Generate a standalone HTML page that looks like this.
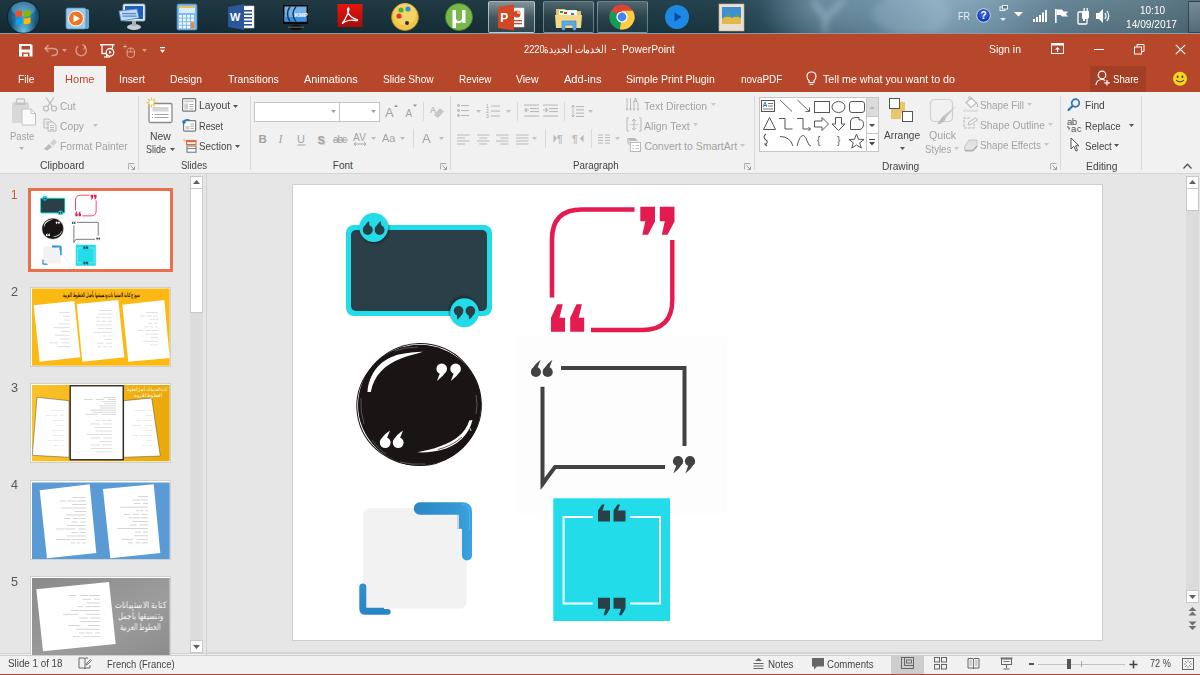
<!DOCTYPE html>
<html><head><meta charset="utf-8">
<style>
*{margin:0;padding:0;box-sizing:border-box}
html,body{width:1200px;height:675px;overflow:hidden;background:#e6e6e6;font-family:"Liberation Sans",sans-serif;position:relative}
.a{position:absolute}
svg.a{overflow:visible}
.t{position:absolute;white-space:nowrap;line-height:1;transform-origin:0 0}

</style></head><body>
<div class="a" style="left:0px;top:0px;width:1200px;height:33px;background:linear-gradient(90deg,#132c36 0%,#15303a 40%,#1a3945 60%,#2a4d5c 64%,#4f7487 69%,#6d92a8 74%,#84a6bb 78%,#7597ac 83%,#5f7f90 88%,#5a7886 95%,#4d6a78 100%);"></div>
<div class="a" style="left:0px;top:0px;width:1200px;height:33px;background:radial-gradient(ellipse 60px 40px at 820px 10px,rgba(160,190,210,0.35),rgba(160,190,210,0) 100%);"></div>
<div class="a" style="left:0px;top:0px;width:1200px;height:33px;background:linear-gradient(180deg,rgba(255,255,255,0.05),rgba(0,0,0,0.08));"></div>
<svg class="a" style="left:0px;top:0px;" width="1200" height="33" viewBox="0 0 1200 33"><defs><filter id="blr"><feGaussianBlur stdDeviation="3"/></filter></defs><g filter="url(#blr)" opacity="0.35" stroke="#c8e0ee" fill="none"><path d="M812 0 Q822 12 825 20 L825 33" stroke-width="5"/><path d="M845 0 Q832 10 826 20" stroke-width="5"/></g><ellipse cx="912" cy="14" rx="40" ry="20" fill="#a9c6d8" opacity="0.25" filter="url(#blr)"/></svg>
<div class="a" style="left:0px;top:33px;width:1200px;height:1px;background:#8a9ba3;"></div>
<div class="a" style="left:0px;top:34px;width:1200px;height:58px;background:#b7472a;"></div>
<div class="a" style="left:0px;top:92px;width:1200px;height:81px;background:#f1f1f1;"></div>
<div class="a" style="left:0px;top:173px;width:1200px;height:1px;background:#d4d4d4;"></div>
<div class="a" style="left:0px;top:174px;width:1200px;height:481px;background:#e6e6e6;"></div>
<div class="a" style="left:0px;top:653px;width:1200px;height:1px;background:#d0d0d0;"></div>
<div class="a" style="left:0px;top:654px;width:1200px;height:20px;background:#f1f1f1;"></div>
<div class="a" style="left:0px;top:674px;width:1200px;height:1px;background:#b7472a;"></div>
<svg class="a" style="left:6px;top:0px;" width="35" height="34" viewBox="0 0 35 34"><defs><radialGradient id="orb" cx="50%" cy="45%" r="55%"><stop offset="0" stop-color="#4aa8d8"/><stop offset="0.55" stop-color="#21709e"/><stop offset="1" stop-color="#123a55"/></radialGradient><radialGradient id="orb2" cx="50%" cy="95%" r="45%"><stop offset="0" stop-color="#7fe0ff" stop-opacity="0.8"/><stop offset="1" stop-color="#7fe0ff" stop-opacity="0"/></radialGradient></defs>
<circle cx="17.5" cy="17" r="16.6" fill="#0b1e28"/><circle cx="17.5" cy="17" r="15.8" fill="url(#orb)"/><circle cx="17.5" cy="17" r="15.8" fill="url(#orb2)"/>
<ellipse cx="17.5" cy="9" rx="12" ry="7" fill="#b9e2f7" opacity="0.28"/>
<g transform="translate(18.5 17.5) rotate(-8) translate(-18.5 -17.5)">
<path d="M10.5 10.5 Q13.5 9 17 10.5 L16.2 16.5 Q13 15.2 9.8 16.5 Z" fill="#f25022"/>
<path d="M18.5 10.8 Q22 12 25.5 10.5 L24.7 16.5 Q21.3 17.8 17.7 16.6 Z" fill="#7fba00"/>
<path d="M9.6 17.8 Q12.8 16.5 15.9 17.9 L15.1 23.8 Q12 22.5 8.8 23.8 Z" fill="#00a4ef"/>
<path d="M17.5 18.1 Q21 19.3 24.5 17.8 L23.7 23.9 Q20.2 25.2 16.7 23.9 Z" fill="#ffb900"/></g></svg>
<svg class="a" style="left:64px;top:7px;" width="27" height="24" viewBox="0 0 27 24"><rect x="5" y="2" width="20" height="20" rx="2" fill="#6aa6cf"/><rect x="2" y="1" width="20" height="21" rx="2" fill="#9ccbec" stroke="#4a86b0" stroke-width="0.8"/>
<circle cx="12" cy="11.5" r="7.5" fill="#f0731e" stroke="#fff" stroke-width="1"/><path d="M9.5 7.5 L16 11.5 L9.5 15.5 Z" fill="#fff"/></svg>
<svg class="a" style="left:117px;top:3px;" width="31" height="28" viewBox="0 0 31 28"><rect x="6" y="1" width="22" height="17" rx="1.5" fill="#dfe9f2" stroke="#9aaab8" stroke-width="0.8"/><rect x="8" y="3" width="18" height="13" fill="#1d5fc0"/>
<path d="M2 8 L20 6 L22 15 L4 18 Z" fill="#c3daf5" stroke="#4f86c7" stroke-width="0.8"/>
<g fill="#4f86c7"><rect x="5" y="10" width="14" height="1.2"/><rect x="5.5" y="12.5" width="14" height="1.2"/></g>
<ellipse cx="17" cy="24" rx="7" ry="3" fill="#c8cdd2"/><rect x="15" y="18" width="4" height="5" fill="#aab3bb"/></svg>
<svg class="a" style="left:176px;top:3px;" width="22" height="28" viewBox="0 0 22 28"><rect x="1" y="1" width="20" height="26" rx="1.5" fill="#7fb9e6" stroke="#3c84c4" stroke-width="0.8"/><rect x="3" y="3" width="16" height="7" fill="#d4ecfb"/><rect x="3" y="3" width="16" height="2" fill="#e8c35a"/>
<g fill="#e8f5ff"><rect x="3" y="12.0" width="3" height="2.6"/><rect x="7" y="12.0" width="3" height="2.6"/><rect x="11" y="12.0" width="3" height="2.6"/><rect x="15" y="12.0" width="3" height="2.6"/><rect x="3" y="15.6" width="3" height="2.6"/><rect x="7" y="15.6" width="3" height="2.6"/><rect x="11" y="15.6" width="3" height="2.6"/><rect x="15" y="15.6" width="3" height="2.6"/><rect x="3" y="19.2" width="3" height="2.6"/><rect x="7" y="19.2" width="3" height="2.6"/><rect x="11" y="19.2" width="3" height="2.6"/><rect x="15" y="19.2" width="3" height="2.6"/><rect x="3" y="22.8" width="3" height="2.6"/><rect x="7" y="22.8" width="3" height="2.6"/><rect x="11" y="22.8" width="3" height="2.6"/><rect x="15" y="22.8" width="3" height="2.6"/></g><rect x="15" y="19.2" width="3" height="6.2" fill="#f08a2a"/></svg>
<svg class="a" style="left:227px;top:3px;" width="29" height="28" viewBox="0 0 29 28"><rect x="11" y="3" width="16" height="22" fill="#fff" stroke="#c8c8c8" stroke-width="0.6"/><g fill="#2b579a"><rect x="14" y="7" width="11" height="1.6"/><rect x="14" y="10.5" width="11" height="1.6"/><rect x="14" y="14" width="11" height="1.6"/><rect x="14" y="17.5" width="11" height="1.6"/><rect x="14" y="21" width="11" height="1.6"/></g>
<path d="M1 4 L17 1 L17 27 L1 24 Z" fill="#2b579a"/><text x="3" y="18" font-family="Liberation Sans" font-weight="bold" font-size="11" fill="#fff">W</text></svg>
<svg class="a" style="left:282px;top:4px;" width="27" height="27" viewBox="0 0 27 27"><rect x="1" y="1" width="25" height="19" fill="#0a0a0a"/><rect x="2.5" y="2.5" width="22" height="15" fill="#74b3ea"/><rect x="2.5" y="13" width="22" height="4.5" fill="#3d8ee0"/><path d="M8 2.5 Q3 10 8 17.5" fill="none" stroke="#163a5a" stroke-width="1.5"/><path d="M14 2.5 Q8 10 14 17.5" fill="none" stroke="#1c3550" stroke-width="1.3"/><text x="12.5" y="13" font-family="Liberation Sans" font-weight="bold" font-size="6" fill="#f4f8fc">KMP</text><ellipse cx="14" cy="23.5" rx="6" ry="2.8" fill="#111"/><rect x="6" y="22.5" width="16" height="1.5" fill="#777" opacity="0.6"/></svg>
<svg class="a" style="left:337px;top:3px;" width="27" height="25" viewBox="0 0 27 25"><defs><linearGradient id="acr" x1="0" y1="0" x2="0" y2="1"><stop offset="0" stop-color="#e8140c"/><stop offset="1" stop-color="#a80c0c"/></linearGradient></defs><rect x="0.5" y="1" width="25" height="23" fill="url(#acr)"/><path d="M5.5 20 Q8 17 11 10 Q12.5 5 11.5 5 Q10 5 11 9.5 Q13 14.5 20 16.5 Q21.5 18 18.5 17.5 Q12 16 6.5 19.5 Q5 21 5.5 20 Z" fill="none" stroke="#fff" stroke-width="1.3"/></svg>
<svg class="a" style="left:390px;top:2px;" width="30" height="30" viewBox="0 0 30 30"><circle cx="15" cy="15" r="13.5" fill="#f0c64a" stroke="#b48a1a" stroke-width="0.8"/><circle cx="15" cy="12" r="11" fill="#f7dd7c" opacity="0.6"/><circle cx="11" cy="8" r="2.6" fill="#4cae3a"/><circle cx="18" cy="7" r="2.6" fill="#2a8fd8"/><circle cx="9" cy="14" r="2.6" fill="#e3342a"/><circle cx="17" cy="21" r="2" fill="#333"/></svg>
<svg class="a" style="left:444px;top:2px;" width="30" height="30" viewBox="0 0 30 30"><circle cx="15" cy="15" r="13.5" fill="#78b74a" stroke="#4d8a2a" stroke-width="0.8"/><path d="M8.5 8 L12 8 L12 16 Q12 19 15 19 Q18 19 18 16 L18 8 L21.5 8 L21.5 21 L18.3 21 L18.3 19.3 Q16.8 21.5 14 21.3 Q12.5 21.2 12 20.5 L12 26 L8.5 26 Z" fill="#fff"/></svg>
<div class="a" style="left:488px;top:1px;width:47px;height:32px;background:linear-gradient(180deg,rgba(255,255,255,0.45),rgba(255,255,255,0.18) 50%,rgba(255,255,255,0.12));border:1px solid rgba(255,255,255,0.55);border-radius:2px;"></div>
<svg class="a" style="left:497px;top:4px;" width="30" height="27" viewBox="0 0 30 27"><rect x="10" y="4" width="17" height="19" fill="#fff" stroke="#d6d6d6" stroke-width="0.6"/><circle cx="20" cy="10" r="3.5" fill="#d24726"/><path d="M20 6.5 L20 10 L23.5 10 A3.5 3.5 0 0 0 20 6.5Z" fill="#f3a58c"/><rect x="16" y="16" width="9" height="1.3" fill="#d24726"/><rect x="16" y="19" width="9" height="1.3" fill="#d24726"/>
<path d="M1 3 L17 0.5 L17 26.5 L1 24 Z" fill="#d24726"/><text x="3.2" y="17.5" font-family="Liberation Sans" font-weight="bold" font-size="12" fill="#fff">P</text></svg>
<div class="a" style="left:543px;top:1px;width:51px;height:32px;background:linear-gradient(180deg,rgba(255,255,255,0.22),rgba(255,255,255,0.06) 50%,rgba(255,255,255,0.03));border:1px solid rgba(255,255,255,0.32);border-radius:2px;"></div>
<svg class="a" style="left:554px;top:5px;" width="30" height="26" viewBox="0 0 30 26"><path d="M2 4 L11 4 L13 6 L27 6 L27 22 L2 22 Z" fill="#e8c66a"/><rect x="5" y="5" width="18" height="10" fill="#fff" opacity="0.9"/><rect x="6" y="6" width="3" height="2" fill="#2e9e4a"/><rect x="10" y="7" width="3" height="2" fill="#d33"/><rect x="17" y="8" width="3" height="2" fill="#3a7ad8"/><path d="M1 10 L28 10 L27 23 L2 23 Z" fill="#f3d88a"/><path d="M8 16 L22 16 L22 25 L19 25 L19 20 L11 20 L11 25 L8 25 Z" fill="#5aaee8" stroke="#2e7fc0" stroke-width="0.6"/></svg>
<div class="a" style="left:597px;top:1px;width:51px;height:32px;background:linear-gradient(180deg,rgba(255,255,255,0.22),rgba(255,255,255,0.06) 50%,rgba(255,255,255,0.03));border:1px solid rgba(255,255,255,0.32);border-radius:2px;"></div>
<svg class="a" style="left:608px;top:3px;" width="28" height="28" viewBox="0 0 28 28"><circle cx="14" cy="14" r="12.5" fill="#db4437"/><path d="M14 14 L3.2 7.7 A12.5 12.5 0 0 0 11.8 26.3 Z" fill="#0f9d58"/><path d="M14 14 L11.8 26.3 A12.5 12.5 0 0 0 24.8 7.7 L14 7.7 Z" fill="#ffcd40"/><circle cx="14" cy="14" r="5.6" fill="#fff"/><circle cx="14" cy="14" r="4.4" fill="#4285f4"/></svg>
<svg class="a" style="left:664px;top:4px;" width="26" height="26" viewBox="0 0 26 26"><circle cx="13" cy="13" r="12" fill="#1e88e5"/><path d="M10.5 8.5 L17.5 13 L10.5 17.5 Z" fill="#0d47a1"/></svg>
<svg class="a" style="left:718px;top:3px;" width="28" height="30" viewBox="0 0 28 30"><rect x="1" y="1" width="25" height="27" fill="#e9e1cf" stroke="#bdb29a" stroke-width="0.6"/><rect x="4" y="4" width="19" height="17" fill="#3d8fd6"/><path d="M4 16 Q9 11 14 15 Q18 12 23 15 L23 21 L4 21 Z" fill="#e2b84a"/><path d="M8 14 L10 9 L12 14 Z" fill="#4caf50"/><path d="M17 14 L19 10 L21 14 Z" fill="#4caf50"/></svg>
<div class="t" style="left:958.00px;top:10.69px;font-size:11px;color:#e8eef2;transform:scaleX(0.818);">FR</div>
<svg class="a" style="left:976px;top:8px;" width="15" height="15" viewBox="0 0 15 15"><circle cx="7.5" cy="7.5" r="6.8" fill="#1a43b8" stroke="#cfd8e8" stroke-width="1"/><circle cx="7.5" cy="6" r="5" fill="#3d6ee0" opacity="0.5"/><text x="4.6" y="11.3" font-family="Liberation Sans" font-weight="bold" font-size="10" fill="#fff">?</text></svg>
<svg class="a" style="left:997px;top:5px;" width="12" height="20" viewBox="0 0 12 20"><rect x="3" y="2" width="5" height="3.5" fill="none" stroke="#e8eef2" stroke-width="1"/><rect x="5.5" y="0.5" width="5" height="3.5" fill="#5a7886" stroke="#e8eef2" stroke-width="1"/><path d="M3 13 L9 13 L6 16 Z" fill="#e8eef2"/></svg>
<svg class="a" style="left:1013px;top:11px;" width="11" height="6" viewBox="0 0 11 6"><path d="M1 1 L10 1 L5.5 5.5 Z" fill="#fff"/></svg>
<svg class="a" style="left:1032px;top:9px;" width="16" height="14" viewBox="0 0 16 14"><g fill="#fff"><rect x="1" y="10" width="2" height="3"/><rect x="4" y="8" width="2" height="5"/><rect x="7" y="6" width="2" height="7"/><rect x="10" y="3.5" width="2" height="9.5"/><rect x="13" y="1" width="2" height="12"/></g></svg>
<svg class="a" style="left:1054px;top:8px;" width="16" height="16" viewBox="0 0 16 16"><rect x="1" y="1" width="1.6" height="14" fill="#fff"/><path d="M2.6 1.5 L8 1.5 L9.5 3.5 L14 3.5 L12 6 L14 8.5 L8 8.5 L6.8 7 L2.6 7 Z" fill="#fff"/></svg>
<svg class="a" style="left:1077px;top:7px;" width="15" height="18" viewBox="0 0 15 18"><rect x="1" y="5" width="9" height="12" rx="1" fill="none" stroke="#fff" stroke-width="1.3"/><path d="M5 4 L12 4 L12 10 Q12 12 9 12 L8 12 L8 14 L6 14 L6 12 Q5 12 5 10 Z" fill="#fff"/><rect x="6.5" y="1" width="1.3" height="3" fill="#fff"/><rect x="9.5" y="1" width="1.3" height="3" fill="#fff"/></svg>
<svg class="a" style="left:1095px;top:8px;" width="17" height="16" viewBox="0 0 17 16"><path d="M1 5 L4 5 L8 1 L8 15 L4 11 L1 11 Z" fill="#fff"/><path d="M10 5 Q12 8 10 11" fill="none" stroke="#fff" stroke-width="1.2"/><path d="M12 3 Q15.5 8 12 13" fill="none" stroke="#fff" stroke-width="1.2"/></svg>
<div class="t" style="left:1139.50px;top:5.19px;font-size:11px;color:#fff;transform:scaleX(0.908);">10:10</div>
<div class="t" style="left:1126.00px;top:18.69px;font-size:11px;color:#fff;transform:scaleX(0.926);">14/09/2017</div>
<div class="a" style="left:1188px;top:1px;width:12px;height:32px;background:linear-gradient(180deg,rgba(255,255,255,0.18),rgba(255,255,255,0.05));border:1px solid rgba(20,30,40,0.6);border-right:none;"></div>
<svg class="a" style="left:18.5px;top:44px;" width="14" height="13" viewBox="0 0 14 13"><path d="M0 0 L12 0 L13.5 1.5 L13.5 12.5 L0 12.5 Z" fill="#fff"/><rect x="2.5" y="2" width="8.5" height="3.5" fill="#b7472a"/><rect x="3" y="8.5" width="7.5" height="4" fill="#b7472a"/><rect x="4.5" y="9.8" width="4.5" height="2.7" fill="#fff"/></svg>
<svg class="a" style="left:44px;top:44px;" width="15" height="12" viewBox="0 0 15 12"><path d="M4.5 1 L1 4.5 L4.5 8" fill="none" stroke="rgba(255,255,255,0.45)" stroke-width="1.4"/><path d="M1.5 4.5 L8.5 4.5 Q13.5 4.5 13.5 8 Q13.5 11.5 9 11.5 L7.5 11.5" fill="none" stroke="rgba(255,255,255,0.45)" stroke-width="1.4"/></svg>
<svg class="a" style="left:62px;top:48.5px;" width="6" height="4" viewBox="0 0 6 4"><path d="M0 0 L5 0 L2.5 3 Z" fill="rgba(255,255,255,0.45)"/></svg>
<svg class="a" style="left:75px;top:44px;" width="13" height="12" viewBox="0 0 13 12"><path d="M9.5 2.5 A5.2 5.2 0 1 1 3.2 2.2" fill="none" stroke="rgba(255,255,255,0.45)" stroke-width="1.4"/><path d="M7.5 0.5 L10.5 2.5 L8.5 5.5" fill="none" stroke="rgba(255,255,255,0.45)" stroke-width="1.3"/></svg>
<svg class="a" style="left:100px;top:44px;" width="15" height="14" viewBox="0 0 15 14"><rect x="0" y="0" width="14.5" height="1.4" fill="#fff"/><path d="M2 1 L2 9.5 L7 9.5" fill="none" stroke="#fff" stroke-width="1.3"/><path d="M12.5 1 L12.5 4.5" fill="none" stroke="#fff" stroke-width="1.3"/><circle cx="10" cy="8.3" r="3.8" fill="none" stroke="#fff" stroke-width="1.3"/><path d="M9 6.5 L11.8 8.3 L9 10.1 Z" fill="#fff"/><path d="M4 13 L10 13" stroke="#fff" stroke-width="1.2"/><path d="M6.5 10 L6.5 13" stroke="#fff" stroke-width="1.1"/></svg>
<svg class="a" style="left:122px;top:43.5px;" width="14" height="14" viewBox="0 0 14 14"><path d="M3 0.5 L3 4.5 M1 2.5 L5 2.5" stroke="rgba(255,255,255,0.45)" stroke-width="1"/><rect x="5" y="4" width="7.5" height="9.5" rx="3.7" fill="none" stroke="rgba(255,255,255,0.45)" stroke-width="1.1"/><path d="M8.75 4 L8.75 8 M5 8 L12.5 8" stroke="rgba(255,255,255,0.45)" stroke-width="1"/></svg>
<svg class="a" style="left:141.5px;top:48.5px;" width="5" height="4" viewBox="0 0 5 4"><path d="M0 0 L5 0 L2.5 3 Z" fill="rgba(255,255,255,0.45)"/></svg>
<svg class="a" style="left:160px;top:47px;" width="5" height="7" viewBox="0 0 5 7"><rect x="0" y="0" width="5" height="1.2" fill="#fff"/><path d="M0 2.8 L5 2.8 L2.5 6 Z" fill="#fff"/></svg>
<div class="t" style="left:523.50px;top:43.69px;font-size:11px;color:#fff;transform:scaleX(0.846);">2220</div>
<div class="t" style="left:544.00px;top:43.69px;font-size:11px;color:#fff;transform:scaleX(0.826);">الخدمات الجديدة</div>
<div class="a" style="left:612px;top:49px;width:4px;height:1px;background:#fff;"></div>
<div class="t" style="left:621.80px;top:43.69px;font-size:11px;color:#fff;transform:scaleX(0.937);">PowerPoint</div>
<div class="t" style="left:989.00px;top:43.69px;font-size:11px;color:#fff;transform:scaleX(0.951);">Sign in</div>
<svg class="a" style="left:1051px;top:43px;" width="14" height="12" viewBox="0 0 14 12"><rect x="0.5" y="0.5" width="12" height="10" fill="none" stroke="#fff" stroke-width="1"/><rect x="0.5" y="0.5" width="12" height="2" fill="#fff"/><path d="M6.5 4 L4 6.5 L9 6.5 Z" fill="#fff"/><rect x="6" y="6" width="1" height="3" fill="#fff"/></svg>
<div class="a" style="left:1094px;top:49px;width:10px;height:1px;background:#fff;"></div>
<svg class="a" style="left:1134px;top:44px;" width="11" height="11" viewBox="0 0 11 11"><rect x="0.5" y="3" width="7" height="7" fill="none" stroke="#fff" stroke-width="1"/><path d="M3 3 L3 0.5 L10 0.5 L10 7.5 L7.5 7.5" fill="none" stroke="#fff" stroke-width="1"/></svg>
<svg class="a" style="left:1175px;top:44px;" width="11" height="11" viewBox="0 0 11 11"><path d="M0.8 0.8 L10.2 10.2 M10.2 0.8 L0.8 10.2" stroke="#fff" stroke-width="1.1"/></svg>
<div class="a" style="left:54px;top:66px;width:52px;height:26px;background:#f1f1f1;"></div>
<div class="t" style="left:17.50px;top:73.69px;font-size:11px;color:#ffffff;transform:scaleX(0.931);">File</div>
<div class="t" style="left:65.00px;top:73.69px;font-size:11px;color:#b7472a;transform:scaleX(1.005);">Home</div>
<div class="t" style="left:119.00px;top:73.69px;font-size:11px;color:#ffffff;transform:scaleX(0.945);">Insert</div>
<div class="t" style="left:170.00px;top:73.69px;font-size:11px;color:#ffffff;transform:scaleX(0.935);">Design</div>
<div class="t" style="left:228.00px;top:73.69px;font-size:11px;color:#ffffff;transform:scaleX(0.952);">Transitions</div>
<div class="t" style="left:304.00px;top:73.69px;font-size:11px;color:#ffffff;transform:scaleX(0.987);">Animations</div>
<div class="t" style="left:382.50px;top:73.69px;font-size:11px;color:#ffffff;transform:scaleX(0.921);">Slide Show</div>
<div class="t" style="left:458.80px;top:73.69px;font-size:11px;color:#ffffff;transform:scaleX(0.901);">Review</div>
<div class="t" style="left:516.30px;top:73.69px;font-size:11px;color:#ffffff;transform:scaleX(0.952);">View</div>
<div class="t" style="left:563.80px;top:73.69px;font-size:11px;color:#ffffff;transform:scaleX(1.005);">Add-ins</div>
<div class="t" style="left:626.30px;top:73.69px;font-size:11px;color:#ffffff;transform:scaleX(0.955);">Simple Print Plugin</div>
<div class="t" style="left:740.50px;top:73.69px;font-size:11px;color:#ffffff;transform:scaleX(0.899);">novaPDF</div>
<svg class="a" style="left:806px;top:71px;" width="11" height="15" viewBox="0 0 11 15"><path d="M5.5 1 Q1 1 1 5.5 Q1 8 3 9.5 L3 11.5 L8 11.5 L8 9.5 Q10 8 10 5.5 Q10 1 5.5 1 Z" fill="none" stroke="#fff" stroke-width="1.1"/><path d="M3.5 13.3 L7.5 13.3" stroke="#fff" stroke-width="1.1"/></svg>
<div class="t" style="left:822.50px;top:73.69px;font-size:11px;color:#ffffff;transform:scaleX(0.972);">Tell me what you want to do</div>
<div class="a" style="left:1090px;top:66px;width:55.5px;height:26px;background:#a43e24;"></div>
<svg class="a" style="left:1095px;top:70px;" width="16" height="16" viewBox="0 0 16 16"><circle cx="7" cy="5" r="3.8" fill="none" stroke="#fff" stroke-width="1.2"/><path d="M1 15 Q1.5 9.5 7 9.5 Q9 9.5 10 10.5" fill="none" stroke="#fff" stroke-width="1.2"/><path d="M12 10 L12 15.5 M9.3 12.8 L14.7 12.8" stroke="#fff" stroke-width="1.2"/></svg>
<div class="t" style="left:1113.00px;top:73.69px;font-size:11px;color:#ffffff;transform:scaleX(0.876);">Share</div>
<svg class="a" style="left:1172px;top:71px;" width="16" height="16" viewBox="0 0 16 16"><circle cx="8" cy="7.8" r="7" fill="#f7d41e"/><ellipse cx="5.6" cy="5.8" rx="0.9" ry="1.3" fill="#333"/><ellipse cx="10.4" cy="5.8" rx="0.9" ry="1.3" fill="#333"/><path d="M4 9 Q8 12.8 12 9" fill="none" stroke="#333" stroke-width="1"/></svg>
<div class="a" style="left:138px;top:96px;width:1px;height:74px;background:#dadada;"></div>
<div class="a" style="left:250px;top:96px;width:1px;height:74px;background:#dadada;"></div>
<div class="a" style="left:450px;top:96px;width:1px;height:74px;background:#dadada;"></div>
<div class="a" style="left:754px;top:96px;width:1px;height:74px;background:#dadada;"></div>
<div class="a" style="left:1060px;top:96px;width:1px;height:74px;background:#dadada;"></div>
<div class="a" style="left:1141px;top:96px;width:1px;height:74px;background:#dadada;"></div>
<svg class="a" style="left:11px;top:98px;" width="26" height="28" viewBox="0 0 26 28"><rect x="1" y="4" width="17" height="21" rx="1.5" fill="#d8d8d8"/><rect x="5.5" y="1" width="8" height="5" rx="1" fill="none" stroke="#c4c4c4" stroke-width="1.3"/><rect x="4" y="5" width="11" height="2" fill="#c4c4c4"/>
<path d="M11 11 L20 11 L24.5 15.5 L24.5 27 L11 27 Z" fill="#fafafa" stroke="#c2c2c2" stroke-width="1"/><path d="M20 11 L20 15.5 L24.5 15.5" fill="none" stroke="#c2c2c2" stroke-width="1"/></svg>
<div class="t" style="left:10.00px;top:130.71px;font-size:10.5px;color:#a3a3a3;transform:scaleX(0.909);">Paste</div>
<svg class="a" style="left:18.5px;top:146.5px;" width="5" height="3" viewBox="0 0 5 3"><path d="M0 0 L5 0 L2.5 3 Z" fill="#b5b5b5"/></svg>
<svg class="a" style="left:43px;top:97px;" width="14" height="15" viewBox="0 0 14 15"><circle cx="3" cy="11.5" r="2.5" fill="none" stroke="#b9b9b9" stroke-width="1.2"/><circle cx="11" cy="11.5" r="2.5" fill="none" stroke="#b9b9b9" stroke-width="1.2"/><path d="M4.5 9.5 L11 0.5 M9.5 9.5 L3 0.5" stroke="#b9b9b9" stroke-width="1.2"/></svg>
<div class="t" style="left:60.40px;top:100.71px;font-size:10.5px;color:#a3a3a3;transform:scaleX(0.955);">Cut</div>
<svg class="a" style="left:43px;top:118px;" width="14" height="14" viewBox="0 0 14 14"><path d="M1 1 L6 1 L8 3 L8 10 L1 10 Z" fill="none" stroke="#b9b9b9" stroke-width="1"/><path d="M5 4 L10 4 L13 7 L13 13 L5 13 Z" fill="#f1f1f1" stroke="#b9b9b9" stroke-width="1"/><path d="M7 7.5 L11 7.5 M7 9.5 L11 9.5 M7 11.5 L11 11.5 M2.5 4 L5 4 M2.5 6 L4.5 6" stroke="#b9b9b9" stroke-width="0.8"/></svg>
<div class="t" style="left:60.40px;top:120.71px;font-size:10.5px;color:#a3a3a3;transform:scaleX(0.979);">Copy</div>
<svg class="a" style="left:92.5px;top:123.5px;" width="5" height="3" viewBox="0 0 5 3"><path d="M0 0 L5 0 L2.5 3 Z" fill="#c2c2c2"/></svg>
<svg class="a" style="left:43px;top:138px;" width="15" height="13" viewBox="0 0 15 13"><path d="M1 11 L6 6 L9 9 L4 12.5 Z" fill="#b9b9b9"/><path d="M7 5 L11 1 L14 4 L10 8 Z" fill="#cfcfcf"/></svg>
<div class="t" style="left:60.40px;top:141.01px;font-size:10.5px;color:#a3a3a3;transform:scaleX(0.974);">Format Painter</div>
<div class="t" style="left:40.00px;top:161.03px;font-size:10px;color:#444444;transform:scaleX(1.037);">Clipboard</div>
<svg class="a" style="left:128px;top:163px;" width="7" height="7" viewBox="0 0 7 7"><path d="M0.5 6.5 L0.5 0.5 L6.5 0.5" fill="none" stroke="#b0b0b0" stroke-width="1"/><path d="M2.5 2.5 L6.5 6.5 M6.5 3.5 L6.5 6.5 L3.5 6.5" fill="none" stroke="#9a9a9a" stroke-width="1"/></svg>
<svg class="a" style="left:146px;top:97px;" width="28" height="26" viewBox="0 0 28 26"><rect x="3" y="6.5" width="23" height="19" rx="1.5" fill="#fff" stroke="#8a8a8a" stroke-width="1.3"/><rect x="6.5" y="10" width="16" height="4.5" fill="#d6d6d6"/><path d="M8.5 17.5 L22.5 17.5 M8.5 20.5 L22.5 20.5" stroke="#9a9a9a" stroke-width="0.9"/><path d="M6 17.5 L7 17.5 M6 20.5 L7 20.5" stroke="#9a9a9a" stroke-width="0.9"/>
<g stroke="#efc34a" stroke-width="1.3"><path d="M5.5 0.5 L5.5 10.5 M0.5 5.5 L10.5 5.5 M2 2 L9 9 M9 2 L2 9"/></g><circle cx="5.5" cy="5.5" r="2.3" fill="#fff"/></svg>
<div class="t" style="left:150.40px;top:130.71px;font-size:10.5px;color:#444444;transform:scaleX(0.990);">New</div>
<div class="t" style="left:145.80px;top:144.11px;font-size:10.5px;color:#444444;transform:scaleX(0.857);">Slide</div>
<svg class="a" style="left:170.0px;top:148.0px;" width="5" height="3" viewBox="0 0 5 3"><path d="M0 0 L5 0 L2.5 3 Z" fill="#555"/></svg>
<svg class="a" style="left:181.5px;top:98px;" width="15" height="14" viewBox="0 0 15 14"><rect x="0.6" y="0.6" width="13" height="12.5" rx="0.8" fill="#fff" stroke="#7a7a7a" stroke-width="1.2"/><rect x="2.3" y="2.3" width="9.6" height="2" fill="#cfcfcf"/><rect x="2.3" y="5.5" width="3.6" height="6" fill="#cfcfcf"/><path d="M7.5 6.5 L11.5 6.5 M7.5 8.7 L11.5 8.7 M7.5 10.9 L11.5 10.9" stroke="#a5a5a5" stroke-width="0.9"/></svg>
<div class="t" style="left:199.00px;top:100.41px;font-size:10.5px;color:#444444;transform:scaleX(0.990);">Layout</div>
<svg class="a" style="left:233.0px;top:104.5px;" width="5" height="3" viewBox="0 0 5 3"><path d="M0 0 L5 0 L2.5 3 Z" fill="#555"/></svg>
<svg class="a" style="left:181.5px;top:118px;" width="15" height="14" viewBox="0 0 15 14"><rect x="1.6" y="2.6" width="12" height="10.5" rx="0.8" fill="#fff" stroke="#7a7a7a" stroke-width="1.2"/><rect x="3.5" y="8" width="4" height="3.5" fill="#d0d0d0"/><path d="M8.5 6 L12 6 M8.5 8.2 L12 8.2 M8.5 10.4 L12 10.4" stroke="#a5a5a5" stroke-width="0.9"/><path d="M1.2 5.5 Q2 0.8 7.5 2" fill="none" stroke="#2e75b6" stroke-width="1.6"/><path d="M0 2.5 L1.3 6.5 L4.5 4" fill="#2e75b6"/></svg>
<div class="t" style="left:199.00px;top:120.71px;font-size:10.5px;color:#444444;transform:scaleX(0.875);">Reset</div>
<svg class="a" style="left:181.5px;top:138px;" width="15" height="15" viewBox="0 0 15 15"><path d="M2.5 0.5 L4 2.3 L2.5 4 L1 2.3 Z" fill="#f5c27a"/><rect x="4.5" y="2.5" width="9.5" height="4" fill="none" stroke="#e06a3b" stroke-width="1.1"/><rect x="4.5" y="2.5" width="9.5" height="1.6" fill="#e06a3b"/><rect x="5" y="8" width="9" height="6.2" fill="#fff" stroke="#7a7a7a" stroke-width="1.1"/><path d="M5 10.6 L14 10.6" stroke="#7a7a7a" stroke-width="1"/></svg>
<div class="t" style="left:199.00px;top:141.01px;font-size:10.5px;color:#444444;transform:scaleX(0.942);">Section</div>
<svg class="a" style="left:235.0px;top:145.0px;" width="5" height="3" viewBox="0 0 5 3"><path d="M0 0 L5 0 L2.5 3 Z" fill="#555"/></svg>
<div class="t" style="left:181.30px;top:161.03px;font-size:10px;color:#444444;transform:scaleX(0.955);">Slides</div>
<div class="a" style="left:254px;top:102px;width:86px;height:20px;background:#fff;border:1px solid #c6c6c6;"></div>
<div class="a" style="left:339px;top:102px;width:41px;height:20px;background:#fff;border:1px solid #c6c6c6;"></div>
<svg class="a" style="left:330.5px;top:110.0px;" width="5" height="3" viewBox="0 0 5 3"><path d="M0 0 L5 0 L2.5 3 Z" fill="#a0a0a0"/></svg>
<svg class="a" style="left:371.0px;top:110.0px;" width="5" height="3" viewBox="0 0 5 3"><path d="M0 0 L5 0 L2.5 3 Z" fill="#a0a0a0"/></svg>
<svg class="a" style="left:385px;top:104px;" width="13" height="14" viewBox="0 0 13 14"><text x="0" y="13" font-family="Liberation Sans" font-size="13" fill="#a3a3a3">A</text><path d="M9 3 L11 0.5 L13 3 Z" fill="#999"/></svg>
<svg class="a" style="left:405px;top:104px;" width="13" height="14" viewBox="0 0 13 14"><text x="0.5" y="13" font-family="Liberation Sans" font-size="10" fill="#a3a3a3">A</text><path d="M8 0.5 L12 0.5 L10 3 Z" fill="#999"/></svg>
<div class="a" style="left:423px;top:102px;width:1px;height:19px;background:#dadada;"></div>
<svg class="a" style="left:430px;top:104px;" width="14" height="14" viewBox="0 0 14 14"><text x="0" y="9" font-family="Liberation Sans" font-size="9" fill="#a3a3a3">A</text><path d="M4 11 L10 4 L14 7.5 L8 14 Z" fill="#c8c8c8"/></svg>
<svg class="a" style="left:258px;top:133px;" width="10" height="11" viewBox="0 0 10 11"><text x="0.5" y="10" font-family="Liberation Sans" font-weight="bold" font-size="11.5" fill="#a3a3a3">B</text></svg>
<svg class="a" style="left:278px;top:133px;" width="9" height="11" viewBox="0 0 9 11"><text x="0.5" y="10" font-family="Liberation Serif" font-style="italic" font-size="12" fill="#a3a3a3">I</text></svg>
<svg class="a" style="left:297px;top:133px;" width="10" height="13" viewBox="0 0 10 13"><text x="0" y="10" font-family="Liberation Sans" font-size="11" fill="#a3a3a3">U</text><rect x="0.5" y="11.5" width="8" height="1" fill="#a3a3a3"/></svg>
<svg class="a" style="left:317px;top:133px;" width="11" height="13" viewBox="0 0 11 13"><text x="1.5" y="11.5" font-family="Liberation Sans" font-weight="bold" font-size="11" fill="#d0d0d0">S</text><text x="0.5" y="10.5" font-family="Liberation Sans" font-weight="bold" font-size="11" fill="#a3a3a3">S</text></svg>
<svg class="a" style="left:333px;top:134px;" width="16" height="10" viewBox="0 0 16 10"><text x="0" y="9" font-family="Liberation Sans" font-size="10" fill="#a3a3a3" textLength="14">abc</text><rect x="0" y="5.5" width="15" height="1" fill="#a3a3a3"/></svg>
<svg class="a" style="left:353px;top:131px;" width="15" height="16" viewBox="0 0 15 16"><text x="0" y="9.5" font-family="Liberation Sans" font-size="10" fill="#a3a3a3" textLength="13">AV</text><path d="M1 13 L13 13 M1 13 L3 11 M1 13 L3 15 M13 13 L11 11 M13 13 L11 15" stroke="#a3a3a3" stroke-width="0.9" fill="none"/></svg>
<svg class="a" style="left:370.5px;top:136.5px;" width="5" height="3" viewBox="0 0 5 3"><path d="M0 0 L5 0 L2.5 3 Z" fill="#bdbdbd"/></svg>
<div class="t" style="left:382.00px;top:133.46px;font-size:11.5px;color:#a3a3a3;transform:scaleX(0.953);">Aa</div>
<svg class="a" style="left:399.5px;top:136.5px;" width="5" height="3" viewBox="0 0 5 3"><path d="M0 0 L5 0 L2.5 3 Z" fill="#bdbdbd"/></svg>
<div class="a" style="left:413px;top:129px;width:1px;height:19px;background:#dadada;"></div>
<div class="t" style="left:422.00px;top:132.72px;font-size:12.5px;color:#a3a3a3;transform:scaleX(1.055);">A</div>
<svg class="a" style="left:438.5px;top:136.5px;" width="5" height="3" viewBox="0 0 5 3"><path d="M0 0 L5 0 L2.5 3 Z" fill="#bdbdbd"/></svg>
<div class="t" style="left:332.80px;top:161.33px;font-size:10px;color:#444444;">Font</div>
<svg class="a" style="left:439.5px;top:163px;" width="7" height="7" viewBox="0 0 7 7"><path d="M0.5 6.5 L0.5 0.5 L6.5 0.5" fill="none" stroke="#b0b0b0" stroke-width="1"/><path d="M2.5 2.5 L6.5 6.5 M6.5 3.5 L6.5 6.5 L3.5 6.5" fill="none" stroke="#9a9a9a" stroke-width="1"/></svg>
<svg class="a" style="left:457px;top:104px;" width="13" height="14" viewBox="0 0 13 14"><circle cx="1.5" cy="1.5" r="1.4" fill="#b9b9b9"/><circle cx="1.5" cy="6.5" r="1.4" fill="#b9b9b9"/><circle cx="1.5" cy="11.5" r="1.4" fill="#b9b9b9"/><rect x="4" y="1" width="8" height="1.1" fill="#b9b9b9"/><rect x="4" y="6" width="8" height="1.1" fill="#b9b9b9"/><rect x="4" y="11" width="8" height="1.1" fill="#b9b9b9"/></svg>
<svg class="a" style="left:475.8px;top:110.0px;" width="5" height="3" viewBox="0 0 5 3"><path d="M0 0 L5 0 L2.5 3 Z" fill="#c2c2c2"/></svg>
<svg class="a" style="left:486px;top:103px;" width="14" height="15" viewBox="0 0 14 15"><text x="0" y="5" font-family="Liberation Sans" font-size="5" fill="#a3a3a3">1</text><text x="0" y="10" font-family="Liberation Sans" font-size="5" fill="#a3a3a3">2</text><text x="0" y="15" font-family="Liberation Sans" font-size="5" fill="#a3a3a3">3</text><rect x="5" y="2.5" width="9" height="1.1" fill="#b9b9b9"/><rect x="5" y="7.5" width="9" height="1.1" fill="#b9b9b9"/><rect x="5" y="12.5" width="9" height="1.1" fill="#b9b9b9"/></svg>
<svg class="a" style="left:505.8px;top:110.0px;" width="5" height="3" viewBox="0 0 5 3"><path d="M0 0 L5 0 L2.5 3 Z" fill="#c2c2c2"/></svg>
<div class="a" style="left:517px;top:102px;width:1px;height:19px;background:#dadada;"></div>
<svg class="a" style="left:524px;top:104px;" width="15" height="13" viewBox="0 0 15 13"><rect x="0" y="0.5" width="15" height="1.1" fill="#b9b9b9"/><rect x="6" y="4" width="9" height="1.1" fill="#b9b9b9"/><rect x="6" y="7" width="9" height="1.1" fill="#b9b9b9"/><rect x="0" y="11.5" width="15" height="1.1" fill="#b9b9b9"/><path d="M5 6 L0.8 6 M3 3.8 L0.8 6 L3 8.2" stroke="#b9b9b9" stroke-width="1.1" fill="none"/></svg>
<svg class="a" style="left:543px;top:104px;" width="15" height="13" viewBox="0 0 15 13"><rect x="0" y="0.5" width="15" height="1.1" fill="#b9b9b9"/><rect x="6" y="4" width="9" height="1.1" fill="#b9b9b9"/><rect x="6" y="7" width="9" height="1.1" fill="#b9b9b9"/><rect x="0" y="11.5" width="15" height="1.1" fill="#b9b9b9"/><path d="M0 6 L4.5 6 M2.5 3.8 L4.7 6 L2.5 8.2" stroke="#b9b9b9" stroke-width="1.1" fill="none"/></svg>
<div class="a" style="left:564px;top:102px;width:1px;height:19px;background:#dadada;"></div>
<svg class="a" style="left:571px;top:104px;" width="13" height="15" viewBox="0 0 13 15"><rect x="5" y="2.0" width="8" height="1.1" fill="#b9b9b9"/><rect x="5" y="5.3" width="8" height="1.1" fill="#b9b9b9"/><rect x="5" y="8.6" width="8" height="1.1" fill="#b9b9b9"/><rect x="5" y="11.899999999999999" width="8" height="1.1" fill="#b9b9b9"/><path d="M2 1 L2 13 M0.3 3 L2 1 L3.7 3 M0.3 11 L2 13 L3.7 11" stroke="#b9b9b9" stroke-width="1" fill="none"/></svg>
<svg class="a" style="left:588.3px;top:110.0px;" width="5" height="3" viewBox="0 0 5 3"><path d="M0 0 L5 0 L2.5 3 Z" fill="#c2c2c2"/></svg>
<svg class="a" style="left:457px;top:133.5px;" width="13" height="11" viewBox="0 0 13 11"><rect x="0" y="0.5" width="12.5" height="1" fill="#b9b9b9"/><rect x="0" y="3.5" width="8" height="1" fill="#b9b9b9"/><rect x="0" y="6.5" width="12.5" height="1" fill="#b9b9b9"/><rect x="0" y="9.5" width="8" height="1" fill="#b9b9b9"/></svg>
<svg class="a" style="left:477px;top:133.5px;" width="13" height="11" viewBox="0 0 13 11"><rect x="0" y="0.5" width="12.5" height="1" fill="#b9b9b9"/><rect x="2.25" y="3.5" width="8" height="1" fill="#b9b9b9"/><rect x="0" y="6.5" width="12.5" height="1" fill="#b9b9b9"/><rect x="2.25" y="9.5" width="8" height="1" fill="#b9b9b9"/></svg>
<svg class="a" style="left:496px;top:133.5px;" width="13" height="11" viewBox="0 0 13 11"><rect x="0" y="0.5" width="12.5" height="1" fill="#b9b9b9"/><rect x="4.5" y="3.5" width="8" height="1" fill="#b9b9b9"/><rect x="0" y="6.5" width="12.5" height="1" fill="#b9b9b9"/><rect x="4.5" y="9.5" width="8" height="1" fill="#b9b9b9"/></svg>
<svg class="a" style="left:515.5px;top:133.5px;" width="13" height="11" viewBox="0 0 13 11"><rect x="0" y="0.5" width="12.5" height="1" fill="#b9b9b9"/><rect x="0" y="3.5" width="12.5" height="1" fill="#b9b9b9"/><rect x="0" y="6.5" width="12.5" height="1" fill="#b9b9b9"/><rect x="0" y="9.5" width="12.5" height="1" fill="#b9b9b9"/></svg>
<svg class="a" style="left:532.0px;top:136.5px;" width="5" height="3" viewBox="0 0 5 3"><path d="M0 0 L5 0 L2.5 3 Z" fill="#c2c2c2"/></svg>
<div class="a" style="left:545px;top:129px;width:1px;height:19px;background:#dadada;"></div>
<svg class="a" style="left:553px;top:134px;" width="12" height="9" viewBox="0 0 12 9"><path d="M0.5 0.5 L4 4.5 L0.5 8.5 Z" fill="#b9b9b9"/><text x="4" y="8.5" font-family="Liberation Sans" font-weight="bold" font-size="10" fill="#b9b9b9">¶</text></svg>
<svg class="a" style="left:572px;top:134px;" width="12" height="9" viewBox="0 0 12 9"><text x="0" y="8.5" font-family="Liberation Sans" font-weight="bold" font-size="10" fill="#b9b9b9">¶</text><path d="M11.5 0.5 L8 4.5 L11.5 8.5 Z" fill="#b9b9b9"/></svg>
<div class="a" style="left:591px;top:129px;width:1px;height:19px;background:#dadada;"></div>
<svg class="a" style="left:598px;top:134px;" width="13" height="10" viewBox="0 0 13 10"><rect x="0" y="0.5" width="5" height="1" fill="#b9b9b9"/><rect x="0" y="3.2" width="5" height="1" fill="#b9b9b9"/><rect x="0" y="5.9" width="5" height="1" fill="#b9b9b9"/><rect x="0" y="8.600000000000001" width="5" height="1" fill="#b9b9b9"/><rect x="7" y="0.5" width="5" height="1" fill="#b9b9b9"/><rect x="7" y="3.2" width="5" height="1" fill="#b9b9b9"/><rect x="7" y="5.9" width="5" height="1" fill="#b9b9b9"/><rect x="7" y="8.600000000000001" width="5" height="1" fill="#b9b9b9"/></svg>
<svg class="a" style="left:615.3px;top:136.5px;" width="5" height="3" viewBox="0 0 5 3"><path d="M0 0 L5 0 L2.5 3 Z" fill="#c2c2c2"/></svg>
<div class="t" style="left:572.50px;top:161.33px;font-size:10px;color:#444444;transform:scaleX(0.979);">Paragraph</div>
<svg class="a" style="left:744px;top:163px;" width="7" height="7" viewBox="0 0 7 7"><path d="M0.5 6.5 L0.5 0.5 L6.5 0.5" fill="none" stroke="#b0b0b0" stroke-width="1"/><path d="M2.5 2.5 L6.5 6.5 M6.5 3.5 L6.5 6.5 L3.5 6.5" fill="none" stroke="#9a9a9a" stroke-width="1"/></svg>
<svg class="a" style="left:626px;top:97px;" width="15" height="15" viewBox="0 0 15 15"><path d="M1 1 L1 13 M4.5 1 L4.5 13 M8 6 L8 13 M12 6 L12 13" stroke="#b9b9b9" stroke-width="1"/><path d="M0 11.5 L1 13.5 L2 11.5 M3.5 11.5 L4.5 13.5 L5.5 11.5 M7 11.5 L8 13.5 L9 11.5 M11 11.5 L12 13.5 L13 11.5" stroke="#b9b9b9" stroke-width="0.8" fill="none"/><text x="7" y="6" font-family="Liberation Sans" font-size="7" fill="#a3a3a3">A</text></svg>
<div class="t" style="left:644.40px;top:100.61px;font-size:10.5px;color:#a3a3a3;transform:scaleX(0.992);">Text Direction</div>
<svg class="a" style="left:710.5px;top:103.0px;" width="5" height="3" viewBox="0 0 5 3"><path d="M0 0 L5 0 L2.5 3 Z" fill="#c8c8c8"/></svg>
<svg class="a" style="left:626px;top:117px;" width="16" height="15" viewBox="0 0 16 15"><path d="M3 1 L1 1 L1 14 L3 14 M13 1 L15 1 L15 14 L13 14" stroke="#b9b9b9" stroke-width="1" fill="none"/><path d="M8 2 L8 13 M6 4 L8 2 L10 4 M6 11 L8 13 L10 11" stroke="#b9b9b9" stroke-width="1" fill="none"/><path d="M3.5 7.5 L12.5 7.5" stroke="#b9b9b9" stroke-width="0.6"/></svg>
<div class="t" style="left:644.40px;top:120.61px;font-size:10.5px;color:#a3a3a3;transform:scaleX(1.006);">Align Text</div>
<svg class="a" style="left:693.1px;top:123.0px;" width="5" height="3" viewBox="0 0 5 3"><path d="M0 0 L5 0 L2.5 3 Z" fill="#c8c8c8"/></svg>
<svg class="a" style="left:626px;top:137px;" width="16" height="16" viewBox="0 0 16 16"><path d="M1 1 L9 1 L12 4 L4 4 Z" fill="#b9b9b9"/><path d="M1 1 L4 4 L4 9 L1 6 Z" fill="#cfcfcf"/><rect x="4.5" y="5.5" width="10" height="9" fill="#fff" stroke="#b9b9b9" stroke-width="1"/><path d="M6.5 8.5 L8 8.5 M9.5 8.5 L13 8.5 M6.5 11.5 L8 11.5 M9.5 11.5 L13 11.5" stroke="#b9b9b9" stroke-width="0.9"/></svg>
<div class="t" style="left:644.40px;top:141.21px;font-size:10.5px;color:#a3a3a3;">Convert to SmartArt</div>
<svg class="a" style="left:739.5px;top:143.5px;" width="5" height="3" viewBox="0 0 5 3"><path d="M0 0 L5 0 L2.5 3 Z" fill="#c8c8c8"/></svg>
<div class="a" style="left:759px;top:97px;width:120px;height:55px;background:#fff;border:1px solid #c6c6c6;"></div>
<div class="a" style="left:866px;top:98px;width:12px;height:18px;background:#dcdcdc;border-left:1px solid #c6c6c6;"></div>
<div class="a" style="left:866px;top:116px;width:12px;height:17px;background:#fff;border-left:1px solid #c6c6c6;border-top:1px solid #c6c6c6;"></div>
<div class="a" style="left:866px;top:133px;width:12px;height:18px;background:#fff;border-left:1px solid #c6c6c6;border-top:1px solid #c6c6c6;"></div>
<svg class="a" style="left:869px;top:106px;" width="6" height="3" viewBox="0 0 6 3"><path d="M0 3 L6 3 L3 0 Z" fill="#b8b8b8"/></svg>
<svg class="a" style="left:869px;top:124px;" width="6" height="3" viewBox="0 0 6 3"><path d="M0 0 L6 0 L3 3 Z" fill="#444"/></svg>
<svg class="a" style="left:869px;top:139px;" width="6" height="7" viewBox="0 0 6 7"><rect x="0" y="0" width="6" height="1" fill="#444"/><path d="M0 3 L6 3 L3 6.5 Z" fill="#444"/></svg>
<svg class="a" style="left:759px;top:96px;" width="108" height="56" viewBox="0 0 108 56"><rect x="2.5" y="4.5" width="13" height="11" fill="#fff" stroke="#555555" stroke-width="1"/><text x="3.5" y="10.5" font-family="Liberation Sans" font-weight="bold" font-size="6.5" fill="#2e75b6">A</text><path d="M9 7.5 L14 7.5 M9 10 L14 10 M4 13 L14 13" stroke="#555555" stroke-width="0.8"/>
<path d="M21 4 L33 15.5" stroke="#555555" stroke-width="0.9"/>
<path d="M38.5 4 L50.5 15.5 M50.5 11.5 L50.5 15.5 L46.5 15.5" stroke="#555555" stroke-width="0.9" fill="none"/>
<rect x="55.5" y="5.5" width="15" height="11" fill="none" stroke="#555555" stroke-width="1"/>
<ellipse cx="79.5" cy="11" rx="6.5" ry="5.5" fill="none" stroke="#555555" stroke-width="1"/>
<rect x="90.5" y="5.5" width="15" height="11" rx="2.5" fill="none" stroke="#555555" stroke-width="1"/>
<path d="M4.5 33.5 L10.5 21.5 L16.5 33.5 Z" fill="none" stroke="#555555" stroke-width="1"/>
<path d="M20 22.5 L26 22.5 L26 33 L33.5 33" fill="none" stroke="#555555" stroke-width="1"/>
<path d="M38 22.5 L44 22.5 L44 33 L51.5 33 M49.5 31 L51.5 33 L49.5 35" fill="none" stroke="#555555" stroke-width="1"/>
<path d="M55.5 25 L63 25 L63 21.5 L69.5 28 L63 34.5 L63 31 L55.5 31 Z" fill="none" stroke="#555555" stroke-width="1"/>
<path d="M76.5 21.5 L82.5 21.5 L82.5 28 L86 28 L79.5 34.5 L73 28 L76.5 28 Z" fill="none" stroke="#555555" stroke-width="1"/>
<path d="M91.5 33.5 L91.5 25 Q92 21.5 96 21.5 L100 21.5 L100 24 Q104 23 104.5 27.5 Q104.5 33.5 100 33.5 Z" fill="none" stroke="#555555" stroke-width="1"/>
<path d="M7 38 Q3 41 7 44 Q10 46 6 49 M5.5 47.5 L8 50" fill="none" stroke="#555555" stroke-width="1.1"/>
<path d="M21 40.5 Q31 40.5 34 50" fill="none" stroke="#555555" stroke-width="1"/>
<path d="M38 50 Q41 38.5 44.5 39.5 Q47 40.5 48.5 46 Q50 50 52 50" fill="none" stroke="#555555" stroke-width="1"/>
<text x="58" y="48" font-family="Liberation Sans" font-size="10" fill="#555555">{</text>
<text x="78" y="48" font-family="Liberation Sans" font-size="10" fill="#555555">}</text>
<path d="M97.5 38 L99.5 43.3 L105 43.5 L100.7 46.8 L102.3 52 L97.5 49 L92.7 52 L94.3 46.8 L90 43.5 L95.5 43.3 Z" fill="none" stroke="#555555" stroke-width="1"/></svg>
<svg class="a" style="left:889px;top:98px;" width="26" height="26" viewBox="0 0 26 26"><rect x="6" y="4" width="10" height="11" fill="#e8c66a"/><rect x="2" y="11" width="10" height="10" fill="#e8c66a"/><rect x="0.5" y="0.5" width="10" height="10" fill="#fff" stroke="#555" stroke-width="1"/><rect x="13.5" y="13.5" width="10" height="10" fill="#fff" stroke="#555" stroke-width="1"/></svg>
<div class="t" style="left:884.20px;top:130.41px;font-size:10.5px;color:#444444;transform:scaleX(0.966);">Arrange</div>
<svg class="a" style="left:900.0px;top:147.2px;" width="5" height="3" viewBox="0 0 5 3"><path d="M0 0 L5 0 L2.5 3 Z" fill="#555"/></svg>
<svg class="a" style="left:930px;top:99px;" width="28" height="27" viewBox="0 0 28 27"><rect x="0.5" y="0.5" width="22" height="22" rx="4" fill="none" stroke="#cfcfcf" stroke-width="1.2"/><path d="M26 7 L16 19 L13 17 Z" fill="#c8c8c8"/><path d="M13 17 L16 19 Q14 25 7 25 Q10 21 13 17 Z" fill="#bdbdbd"/></svg>
<div class="t" style="left:928.70px;top:130.41px;font-size:10.5px;color:#a3a3a3;transform:scaleX(1.010);">Quick</div>
<div class="t" style="left:925.00px;top:143.71px;font-size:10.5px;color:#a3a3a3;transform:scaleX(0.920);">Styles</div>
<svg class="a" style="left:953.8px;top:146.5px;" width="5" height="3" viewBox="0 0 5 3"><path d="M0 0 L5 0 L2.5 3 Z" fill="#c8c8c8"/></svg>
<svg class="a" style="left:963px;top:96px;" width="16" height="17" viewBox="0 0 16 17"><path d="M3 6.5 L8.5 2 L13.5 7 L8 11.5 Z" fill="#fafafa" stroke="#b9b9b9" stroke-width="1.1"/><path d="M6 3 Q5 0.5 7 0.8 Q8.5 1.2 8 4" fill="none" stroke="#b9b9b9" stroke-width="1"/><path d="M13.5 7 Q15.5 9 14.5 11" fill="none" stroke="#b9b9b9" stroke-width="1"/><rect x="0" y="13.5" width="15" height="2.5" fill="#e0e0e0"/></svg>
<div class="t" style="left:980.30px;top:100.41px;font-size:10.5px;color:#a3a3a3;transform:scaleX(0.940);">Shape Fill</div>
<svg class="a" style="left:1026.5px;top:103.0px;" width="5" height="3" viewBox="0 0 5 3"><path d="M0 0 L5 0 L2.5 3 Z" fill="#c8c8c8"/></svg>
<svg class="a" style="left:963px;top:117px;" width="16" height="13" viewBox="0 0 16 13"><path d="M7 1 L1 1 L1 11 L11 11 L11 7" fill="none" stroke="#b9b9b9" stroke-width="1.1" stroke-dasharray="3 1"/><path d="M5 8 L6 5 L12.5 0.8 L14.5 3 L8 7.5 Z" fill="none" stroke="#b9b9b9" stroke-width="1"/></svg>
<div class="t" style="left:980.30px;top:120.41px;font-size:10.5px;color:#a3a3a3;transform:scaleX(0.977);">Shape Outline</div>
<svg class="a" style="left:1047.5px;top:123.0px;" width="5" height="3" viewBox="0 0 5 3"><path d="M0 0 L5 0 L2.5 3 Z" fill="#c8c8c8"/></svg>
<svg class="a" style="left:963px;top:138px;" width="16" height="14" viewBox="0 0 16 14"><path d="M1.5 9 L6 2 L14 2 L14 9 L10 13 L2 13 Z" fill="#e3e3e3" stroke="#c6c6c6" stroke-width="1"/><path d="M2 12.5 L10 12.5 L14 8" fill="none" stroke="#b0b0b0" stroke-width="1.5"/></svg>
<div class="t" style="left:980.30px;top:140.41px;font-size:10.5px;color:#a3a3a3;transform:scaleX(0.936);">Shape Effects</div>
<svg class="a" style="left:1043.8px;top:143.0px;" width="5" height="3" viewBox="0 0 5 3"><path d="M0 0 L5 0 L2.5 3 Z" fill="#c8c8c8"/></svg>
<div class="t" style="left:882.00px;top:161.53px;font-size:10px;color:#444444;transform:scaleX(1.014);">Drawing</div>
<svg class="a" style="left:1050px;top:163px;" width="7" height="7" viewBox="0 0 7 7"><path d="M0.5 6.5 L0.5 0.5 L6.5 0.5" fill="none" stroke="#b0b0b0" stroke-width="1"/><path d="M2.5 2.5 L6.5 6.5 M6.5 3.5 L6.5 6.5 L3.5 6.5" fill="none" stroke="#9a9a9a" stroke-width="1"/></svg>
<svg class="a" style="left:1067px;top:98px;" width="14" height="13" viewBox="0 0 14 13"><circle cx="8.5" cy="5" r="3.8" fill="none" stroke="#2e75b6" stroke-width="1.7"/><path d="M5.8 7.8 L1.5 12" stroke="#2e75b6" stroke-width="2.2" stroke-linecap="round"/></svg>
<div class="t" style="left:1084.50px;top:100.31px;font-size:10.5px;color:#444444;transform:scaleX(0.965);">Find</div>
<svg class="a" style="left:1066px;top:117px;" width="17" height="16" viewBox="0 0 17 16"><text x="1" y="7.5" font-family="Liberation Sans" font-size="9.5" fill="#555" textLength="10">ab</text><text x="5" y="15" font-family="Liberation Sans" font-size="9.5" fill="#555" textLength="10.5">ac</text><path d="M1.5 9 Q1.5 11.5 3.8 11.5 M2.5 10.2 L3.9 11.5 L2.5 12.8" stroke="#2e75b6" stroke-width="1" fill="none"/></svg>
<div class="t" style="left:1084.50px;top:120.61px;font-size:10.5px;color:#444444;transform:scaleX(0.927);">Replace</div>
<svg class="a" style="left:1128.5px;top:124.0px;" width="5" height="3" viewBox="0 0 5 3"><path d="M0 0 L5 0 L2.5 3 Z" fill="#555"/></svg>
<svg class="a" style="left:1070px;top:137px;" width="10" height="15" viewBox="0 0 10 15"><path d="M1 1 L1 12 L3.8 9.3 L6 14 L7.5 13.3 L5.5 8.8 L9 8.8 Z" fill="#fff" stroke="#555" stroke-width="1"/></svg>
<div class="t" style="left:1084.50px;top:140.91px;font-size:10.5px;color:#444444;transform:scaleX(0.918);">Select</div>
<svg class="a" style="left:1113.5px;top:144.0px;" width="5" height="3" viewBox="0 0 5 3"><path d="M0 0 L5 0 L2.5 3 Z" fill="#555"/></svg>
<div class="t" style="left:1085.50px;top:161.53px;font-size:10px;color:#444444;transform:scaleX(1.034);">Editing</div>
<svg class="a" style="left:1183px;top:163px;" width="9" height="6" viewBox="0 0 9 6"><path d="M0.5 5.5 L4.5 1.2 L8.5 5.5" fill="none" stroke="#555" stroke-width="1.3"/></svg>
<div class="a" style="left:0px;top:655px;width:207px;height:1px;background:#d2d2d2;"></div>
<div class="a" style="left:206px;top:174px;width:1px;height:481px;background:#d0d0d0;"></div>
<div class="a" style="left:190px;top:176px;width:13px;height:477px;background:#dcdcdc;"></div>
<div class="a" style="left:190px;top:176px;width:13px;height:13px;background:#fff;border:1px solid #c8c8c8;"></div>
<svg class="a" style="left:193px;top:180px;" width="7" height="4" viewBox="0 0 7 4"><path d="M0 4 L7 4 L3.5 0 Z" fill="#606060"/></svg>
<div class="a" style="left:190px;top:188px;width:13px;height:125px;background:#fff;border:1px solid #c8c8c8;"></div>
<div class="a" style="left:190px;top:640px;width:13px;height:13px;background:#fff;border:1px solid #c8c8c8;"></div>
<svg class="a" style="left:193px;top:645px;" width="7" height="4" viewBox="0 0 7 4"><path d="M0 0 L7 0 L3.5 4 Z" fill="#606060"/></svg>
<div class="t" style="left:10.50px;top:188.49px;font-size:13px;color:#c8553a;transform:scaleX(0.885);">1</div>
<div class="t" style="left:10.80px;top:284.69px;font-size:13px;color:#555;transform:scaleX(0.968);">2</div>
<div class="t" style="left:10.80px;top:381.49px;font-size:13px;color:#555;transform:scaleX(0.968);">3</div>
<div class="t" style="left:10.80px;top:478.49px;font-size:13px;color:#555;transform:scaleX(0.968);">4</div>
<div class="t" style="left:10.80px;top:574.99px;font-size:13px;color:#555;transform:scaleX(0.968);">5</div>
<div class="a" style="left:28px;top:188px;width:145px;height:84px;background:#e8704c;"></div>
<div class="a" style="left:31px;top:191px;width:139px;height:78px;background:#fff;"></div>
<div class="a" style="left:30px;top:287px;width:141px;height:80px;background:#fff;border:1px solid #d0d0d0;"></div>
<div class="a" style="left:30px;top:383px;width:141px;height:80px;background:#fff;border:1px solid #d0d0d0;"></div>
<div class="a" style="left:30px;top:480px;width:141px;height:80px;background:#fff;border:1px solid #d0d0d0;"></div>
<div class="a" style="left:30px;top:576px;width:141px;height:79px;background:#fff;border:1px solid #d0d0d0;border-bottom:none;"></div>
<svg class="a" style="left:0px;top:0px;width:1200px;height:675px;" width="1" height="1" viewBox="0 0 1200 675"><rect x="32" y="288.5" width="137.7" height="77.2" fill="#fdb913"/><text x="101.3" y="297" font-family="Liberation Sans" font-size="5.5" font-weight="bold" fill="#1a1005" text-anchor="middle" textLength="76.7" lengthAdjust="spacingAndGlyphs">نموذج كتابة الاستبيانات وتنسيقها بأجمل الخطوط العربية</text><polygon points="33.7,305.3 74.3,301.0 80.3,357.3 39.7,361.7" fill="#fff" /><polygon points="76.7,304.0 118.3,300.0 124.3,357.3 82.3,361.7" fill="#fff" /><polygon points="122.3,304.7 164.3,300.0 169.7,358.0 128.3,361.7" fill="#fff" /><g opacity="0.5"><rect x="59.2" y="312.0" width="10.8" height="0.9" fill="#bbb"/><rect x="62.8" y="315.8" width="7.2" height="0.9" fill="#bbb"/><rect x="63.8" y="319.6" width="6.2" height="0.9" fill="#bbb"/><rect x="58.8" y="323.4" width="11.2" height="0.9" fill="#bbb"/><rect x="53.6" y="327.2" width="16.4" height="0.9" fill="#bbb"/><rect x="60.8" y="331.0" width="9.2" height="0.9" fill="#bbb"/><rect x="54.8" y="334.8" width="15.2" height="0.9" fill="#bbb"/><rect x="60.3" y="338.6" width="9.7" height="0.9" fill="#bbb"/><rect x="61.2" y="342.4" width="8.8" height="0.9" fill="#bbb"/><rect x="48.9" y="342.4" width="9.3" height="0.9" fill="#bbb"/><rect x="58.1" y="346.2" width="11.9" height="0.9" fill="#bbb"/><rect x="99.4" y="310.0" width="12.6" height="0.9" fill="#bbb"/><rect x="98.5" y="313.6" width="13.5" height="0.9" fill="#bbb"/><rect x="107.0" y="317.3" width="5.0" height="0.9" fill="#bbb"/><rect x="101.5" y="317.3" width="4.5" height="0.9" fill="#bbb"/><rect x="95.7" y="317.3" width="4.3" height="0.9" fill="#bbb"/><rect x="107.8" y="320.9" width="4.2" height="0.9" fill="#bbb"/><rect x="102.1" y="320.9" width="4.0" height="0.9" fill="#bbb"/><rect x="96.4" y="320.9" width="3.9" height="0.9" fill="#bbb"/><rect x="95.5" y="324.5" width="16.5" height="0.9" fill="#bbb"/><rect x="104.9" y="328.2" width="7.1" height="0.9" fill="#bbb"/><rect x="97.9" y="328.2" width="5.8" height="0.9" fill="#bbb"/><rect x="93.5" y="331.8" width="18.5" height="0.9" fill="#bbb"/><rect x="108.4" y="335.5" width="3.6" height="0.9" fill="#bbb"/><rect x="102.3" y="335.5" width="4.2" height="0.9" fill="#bbb"/><rect x="104.2" y="339.1" width="7.8" height="0.9" fill="#bbb"/><rect x="105.8" y="342.7" width="6.2" height="0.9" fill="#bbb"/><rect x="97.1" y="342.7" width="6.3" height="0.9" fill="#bbb"/><rect x="108.6" y="346.4" width="3.4" height="0.9" fill="#bbb"/><rect x="103.2" y="346.4" width="3.4" height="0.9" fill="#bbb"/><rect x="97.5" y="346.4" width="3.7" height="0.9" fill="#bbb"/><rect x="146.0" y="312.0" width="12.0" height="0.9" fill="#bbb"/><rect x="153.5" y="315.6" width="4.5" height="0.9" fill="#bbb"/><rect x="146.8" y="315.6" width="4.7" height="0.9" fill="#bbb"/><rect x="139.7" y="315.6" width="5.4" height="0.9" fill="#bbb"/><rect x="155.9" y="319.2" width="2.1" height="0.9" fill="#bbb"/><rect x="152.7" y="319.2" width="2.4" height="0.9" fill="#bbb"/><rect x="149.9" y="319.2" width="2.3" height="0.9" fill="#bbb"/><rect x="154.2" y="322.8" width="3.8" height="0.9" fill="#bbb"/><rect x="148.0" y="322.8" width="4.1" height="0.9" fill="#bbb"/><rect x="155.0" y="326.4" width="3.0" height="0.9" fill="#bbb"/><rect x="149.5" y="326.4" width="3.7" height="0.9" fill="#bbb"/><rect x="144.5" y="326.4" width="3.8" height="0.9" fill="#bbb"/><rect x="151.3" y="330.0" width="6.7" height="0.9" fill="#bbb"/><rect x="145.4" y="330.0" width="5.2" height="0.9" fill="#bbb"/><rect x="137.7" y="330.0" width="5.5" height="0.9" fill="#bbb"/><rect x="153.6" y="333.6" width="4.4" height="0.9" fill="#bbb"/><rect x="150.3" y="333.6" width="3.0" height="0.9" fill="#bbb"/><rect x="145.6" y="333.6" width="3.1" height="0.9" fill="#bbb"/><rect x="150.7" y="337.2" width="7.3" height="0.9" fill="#bbb"/><rect x="143.2" y="340.8" width="14.8" height="0.9" fill="#bbb"/><rect x="155.8" y="344.4" width="2.2" height="0.9" fill="#bbb"/><rect x="152.9" y="344.4" width="2.3" height="0.9" fill="#bbb"/><rect x="150.4" y="344.4" width="2.0" height="0.9" fill="#bbb"/></g></svg>
<svg class="a" style="left:0px;top:0px;width:1200px;height:675px;" width="1" height="1" viewBox="0 0 1200 675"><defs><linearGradient id="g3" x1="0" y1="0" x2="1" y2="0"><stop offset="0" stop-color="#fcc22a"/><stop offset="1" stop-color="#eaa90a"/></linearGradient></defs><rect x="32" y="385" width="137.7" height="76.3" fill="url(#g3)"/><polygon points="37.0,397.3 69.0,400.7 69.0,457.3 32.3,455.3" fill="#fff" stroke="#3a3020" stroke-width="0.6" stroke-opacity="0.7"/><polygon points="123.7,400.7 151.7,398.0 160.3,456.0 123.7,457.3" fill="#fff" stroke="#3a3020" stroke-width="0.6" stroke-opacity="0.7"/><rect x="70.2" y="385.8" width="53" height="74" fill="#fff" stroke="#111" stroke-width="1.2"/><g opacity="0.4"><rect x="103.5" y="397.0" width="12.5" height="0.9" fill="#999"/><rect x="107.4" y="399.1" width="8.6" height="0.9" fill="#999"/><rect x="95.8" y="399.1" width="8.6" height="0.9" fill="#999"/><rect x="83.9" y="399.1" width="8.9" height="0.9" fill="#999"/><rect x="101.5" y="401.2" width="14.5" height="0.9" fill="#999"/><rect x="104.2" y="403.3" width="11.8" height="0.9" fill="#999"/><rect x="99.1" y="405.4" width="16.9" height="0.9" fill="#999"/><rect x="100.1" y="407.6" width="15.9" height="0.9" fill="#999"/><rect x="90.2" y="409.7" width="25.8" height="0.9" fill="#999"/><rect x="92.6" y="411.8" width="23.4" height="0.9" fill="#999"/><rect x="101.9" y="413.9" width="14.1" height="0.9" fill="#999"/><rect x="85.7" y="413.9" width="11.8" height="0.9" fill="#999"/><rect x="107.2" y="420.0" width="4.8" height="0.9" fill="#aaa"/><rect x="101.4" y="420.0" width="4.4" height="0.9" fill="#aaa"/><rect x="95.5" y="420.0" width="4.1" height="0.9" fill="#aaa"/><rect x="103.0" y="423.5" width="9.0" height="0.9" fill="#aaa"/><rect x="90.4" y="423.5" width="9.9" height="0.9" fill="#aaa"/><rect x="94.1" y="427.0" width="17.9" height="0.9" fill="#aaa"/><rect x="95.7" y="430.5" width="16.3" height="0.9" fill="#aaa"/><rect x="99.5" y="434.0" width="12.5" height="0.9" fill="#aaa"/><rect x="86.9" y="434.0" width="11.9" height="0.9" fill="#aaa"/><rect x="103.2" y="437.5" width="8.8" height="0.9" fill="#aaa"/><rect x="90.5" y="437.5" width="10.3" height="0.9" fill="#aaa"/><rect x="99.2" y="441.0" width="12.8" height="0.9" fill="#aaa"/><rect x="102.1" y="444.5" width="9.9" height="0.9" fill="#aaa"/><rect x="90.2" y="444.5" width="9.8" height="0.9" fill="#aaa"/><rect x="90.7" y="448.0" width="21.3" height="0.9" fill="#aaa"/><rect x="95.5" y="451.5" width="16.5" height="0.9" fill="#aaa"/><rect x="50.0" y="410.0" width="14.0" height="0.9" fill="#ccc"/><rect x="59.6" y="415.0" width="4.4" height="0.9" fill="#ccc"/><rect x="52.3" y="415.0" width="5.3" height="0.9" fill="#ccc"/><rect x="45.4" y="415.0" width="5.9" height="0.9" fill="#ccc"/><rect x="57.4" y="420.0" width="6.6" height="0.9" fill="#ccc"/><rect x="51.8" y="420.0" width="5.1" height="0.9" fill="#ccc"/><rect x="55.7" y="425.0" width="8.3" height="0.9" fill="#ccc"/><rect x="60.6" y="430.0" width="3.4" height="0.9" fill="#ccc"/><rect x="56.0" y="430.0" width="3.8" height="0.9" fill="#ccc"/><rect x="51.9" y="430.0" width="3.7" height="0.9" fill="#ccc"/><rect x="57.6" y="435.0" width="6.4" height="0.9" fill="#ccc"/><rect x="52.1" y="435.0" width="4.6" height="0.9" fill="#ccc"/><rect x="59.0" y="440.0" width="5.0" height="0.9" fill="#ccc"/><rect x="53.4" y="440.0" width="4.9" height="0.9" fill="#ccc"/><rect x="48.2" y="440.0" width="4.4" height="0.9" fill="#ccc"/><rect x="60.8" y="445.0" width="3.2" height="0.9" fill="#ccc"/><rect x="54.1" y="445.0" width="4.8" height="0.9" fill="#ccc"/><rect x="147.6" y="410.0" width="4.4" height="0.9" fill="#ccc"/><rect x="140.4" y="410.0" width="5.6" height="0.9" fill="#ccc"/><rect x="134.9" y="410.0" width="5.1" height="0.9" fill="#ccc"/><rect x="145.8" y="415.0" width="6.2" height="0.9" fill="#ccc"/><rect x="147.3" y="420.0" width="4.7" height="0.9" fill="#ccc"/><rect x="143.1" y="420.0" width="3.5" height="0.9" fill="#ccc"/><rect x="136.4" y="420.0" width="4.8" height="0.9" fill="#ccc"/><rect x="144.9" y="425.0" width="7.1" height="0.9" fill="#ccc"/><rect x="132.5" y="425.0" width="8.6" height="0.9" fill="#ccc"/><rect x="145.7" y="430.0" width="6.3" height="0.9" fill="#ccc"/><rect x="145.4" y="435.0" width="6.6" height="0.9" fill="#ccc"/><rect x="140.3" y="435.0" width="4.7" height="0.9" fill="#ccc"/><rect x="131.6" y="435.0" width="6.4" height="0.9" fill="#ccc"/><rect x="146.3" y="440.0" width="5.7" height="0.9" fill="#ccc"/><rect x="148.2" y="445.0" width="3.8" height="0.9" fill="#ccc"/><rect x="142.3" y="445.0" width="4.2" height="0.9" fill="#ccc"/></g><g font-family="Liberation Sans" font-size="5" fill="#fff" text-anchor="middle"><text x="147" y="391" textLength="40" lengthAdjust="spacingAndGlyphs">كتابة الاستبيانات بأجمل الخطوط</text><text x="148" y="396.5" textLength="28" lengthAdjust="spacingAndGlyphs">الخطوط العربية</text></g></svg>
<svg class="a" style="left:0px;top:0px;width:1200px;height:675px;" width="1" height="1" viewBox="0 0 1200 675"><rect x="32" y="482.5" width="137.7" height="76.5" fill="#5b9bd5"/><polygon points="39.7,490.3 89.7,484.3 96.3,553.0 47.0,558.3" fill="#fff" /><polygon points="103.0,489.0 153.7,484.3 160.3,553.0 110.3,558.3" fill="#fff" /><g opacity="0.45"><rect x="79.2" y="497.0" width="6.8" height="0.9" fill="#999"/><rect x="72.4" y="497.0" width="6.2" height="0.9" fill="#999"/><rect x="77.1" y="500.5" width="8.9" height="0.9" fill="#999"/><rect x="67.0" y="500.5" width="9.0" height="0.9" fill="#999"/><rect x="59.6" y="500.5" width="6.4" height="0.9" fill="#999"/><rect x="72.2" y="504.0" width="13.8" height="0.9" fill="#999"/><rect x="60.7" y="507.5" width="25.3" height="0.9" fill="#999"/><rect x="74.4" y="511.0" width="11.6" height="0.9" fill="#999"/><rect x="66.1" y="514.5" width="19.9" height="0.9" fill="#999"/><rect x="79.2" y="518.0" width="6.8" height="0.9" fill="#999"/><rect x="73.3" y="518.0" width="5.0" height="0.9" fill="#999"/><rect x="64.2" y="518.0" width="6.2" height="0.9" fill="#999"/><rect x="80.7" y="521.5" width="5.3" height="0.9" fill="#999"/><rect x="71.8" y="521.5" width="5.5" height="0.9" fill="#999"/><rect x="67.0" y="525.0" width="19.0" height="0.9" fill="#999"/><rect x="78.4" y="528.5" width="7.6" height="0.9" fill="#999"/><rect x="65.3" y="528.5" width="10.1" height="0.9" fill="#999"/><rect x="55.9" y="528.5" width="8.7" height="0.9" fill="#999"/><rect x="79.8" y="532.0" width="6.2" height="0.9" fill="#999"/><rect x="71.4" y="532.0" width="6.4" height="0.9" fill="#999"/><rect x="67.0" y="535.5" width="19.0" height="0.9" fill="#999"/><rect x="71.6" y="539.0" width="14.4" height="0.9" fill="#999"/><rect x="56.1" y="539.0" width="14.3" height="0.9" fill="#999"/><rect x="82.5" y="542.5" width="3.5" height="0.9" fill="#999"/><rect x="77.0" y="542.5" width="3.5" height="0.9" fill="#999"/><rect x="71.0" y="542.5" width="4.1" height="0.9" fill="#999"/><rect x="138.2" y="496.0" width="9.8" height="0.9" fill="#999"/><rect x="141.0" y="499.6" width="7.0" height="0.9" fill="#999"/><rect x="132.6" y="499.6" width="7.4" height="0.9" fill="#999"/><rect x="143.2" y="503.1" width="4.8" height="0.9" fill="#999"/><rect x="133.8" y="503.1" width="6.8" height="0.9" fill="#999"/><rect x="120.2" y="506.7" width="27.8" height="0.9" fill="#999"/><rect x="145.0" y="510.3" width="3.0" height="0.9" fill="#999"/><rect x="139.7" y="510.3" width="3.8" height="0.9" fill="#999"/><rect x="135.9" y="510.3" width="3.1" height="0.9" fill="#999"/><rect x="141.6" y="513.9" width="6.4" height="0.9" fill="#999"/><rect x="133.1" y="513.9" width="5.9" height="0.9" fill="#999"/><rect x="123.9" y="513.9" width="6.3" height="0.9" fill="#999"/><rect x="128.6" y="517.4" width="19.4" height="0.9" fill="#999"/><rect x="132.3" y="521.0" width="15.7" height="0.9" fill="#999"/><rect x="139.2" y="524.6" width="8.8" height="0.9" fill="#999"/><rect x="129.6" y="524.6" width="7.0" height="0.9" fill="#999"/><rect x="117.3" y="528.1" width="30.7" height="0.9" fill="#999"/><rect x="143.2" y="531.7" width="4.8" height="0.9" fill="#999"/><rect x="134.8" y="531.7" width="6.3" height="0.9" fill="#999"/><rect x="134.3" y="535.3" width="13.7" height="0.9" fill="#999"/><rect x="137.0" y="538.9" width="11.0" height="0.9" fill="#999"/><rect x="121.4" y="538.9" width="11.7" height="0.9" fill="#999"/><rect x="141.6" y="542.4" width="6.4" height="0.9" fill="#999"/><rect x="135.7" y="542.4" width="4.8" height="0.9" fill="#999"/><rect x="128.3" y="542.4" width="4.7" height="0.9" fill="#999"/></g></svg>
<svg class="a" style="left:0px;top:0px;width:1200px;height:675px;" width="1" height="1" viewBox="0 0 1200 675"><defs><linearGradient id="g5" x1="0" y1="0" x2="1" y2="1"><stop offset="0" stop-color="#8a8a8a"/><stop offset="0.6" stop-color="#9c9c9c"/><stop offset="1" stop-color="#8c8c8c"/></linearGradient></defs><rect x="32" y="578" width="137.7" height="77" fill="url(#g5)"/><polygon points="36.3,589.3 109.0,582.0 115.7,644.0 43.0,651.3" fill="#fff" /><g opacity="0.45"><rect x="89.1" y="595.0" width="10.9" height="0.9" fill="#999"/><rect x="79.7" y="595.0" width="8.3" height="0.9" fill="#999"/><rect x="68.8" y="595.0" width="7.2" height="0.9" fill="#999"/><rect x="94.2" y="598.8" width="5.8" height="0.9" fill="#999"/><rect x="82.6" y="598.8" width="8.3" height="0.9" fill="#999"/><rect x="86.6" y="602.5" width="13.4" height="0.9" fill="#999"/><rect x="92.1" y="606.2" width="7.9" height="0.9" fill="#999"/><rect x="85.5" y="606.2" width="5.9" height="0.9" fill="#999"/><rect x="77.4" y="606.2" width="5.5" height="0.9" fill="#999"/><rect x="71.1" y="610.0" width="28.9" height="0.9" fill="#999"/><rect x="86.4" y="613.8" width="13.6" height="0.9" fill="#999"/><rect x="63.2" y="613.8" width="14.8" height="0.9" fill="#999"/><rect x="90.2" y="617.5" width="9.8" height="0.9" fill="#999"/><rect x="79.2" y="617.5" width="8.4" height="0.9" fill="#999"/><rect x="80.0" y="621.2" width="20.0" height="0.9" fill="#999"/><rect x="88.0" y="625.0" width="12.0" height="0.9" fill="#999"/><rect x="68.5" y="625.0" width="11.9" height="0.9" fill="#999"/><rect x="76.2" y="628.8" width="23.8" height="0.9" fill="#999"/><rect x="95.1" y="632.5" width="4.9" height="0.9" fill="#999"/><rect x="85.6" y="632.5" width="6.8" height="0.9" fill="#999"/><rect x="79.0" y="632.5" width="5.7" height="0.9" fill="#999"/><rect x="90.5" y="636.2" width="9.5" height="0.9" fill="#999"/><rect x="82.8" y="636.2" width="7.1" height="0.9" fill="#999"/><rect x="73.0" y="636.2" width="6.8" height="0.9" fill="#999"/></g><g font-family="Liberation Sans" font-size="8.5" fill="#f6f6f6" text-anchor="middle"><text x="140.5" y="608" textLength="51" lengthAdjust="spacingAndGlyphs">كتابة الاستبيانات</text><text x="140.5" y="619" textLength="45" lengthAdjust="spacingAndGlyphs">وتنسيقها بأجمل</text><text x="140.5" y="630" textLength="41" lengthAdjust="spacingAndGlyphs">الخطوط العربية</text></g></svg>
<div class="a" style="left:292px;top:184px;width:811px;height:457px;background:#fff;border:1px solid #cfcfcf;"></div>
<svg class="a" style="left:0px;top:0px;" width="1200" height="675" viewBox="0 0 1200 675"><defs><filter id="sh" x="-30%" y="-30%" width="160%" height="160%"><feGaussianBlur stdDeviation="1.2"/></filter></defs><rect x="346" y="225" width="146" height="91" rx="8" fill="#22dde9"/><rect x="351" y="230" width="136" height="81" rx="5" fill="#2b3f49"/><circle cx="374.5" cy="229" r="14.4" fill="#111" opacity="0.5" filter="url(#sh)"/><circle cx="463.5" cy="311" r="14.4" fill="#111" opacity="0.5" filter="url(#sh)"/><circle cx="373.7" cy="227.5" r="14.4" fill="#22dde9"/><circle cx="464.5" cy="312.7" r="14.4" fill="#22dde9"/><circle cx="367.8" cy="230.1" r="4.95" fill="#2b3f49"/><path d="M363.25 228.12 Q366.81 222.18 369.04 221.19 L369.53 225.64 L367.80 230.10 Z" fill="#2b3f49"/><circle cx="379.6" cy="230.1" r="4.95" fill="#2b3f49"/><path d="M375.05 228.12 Q378.61 222.18 380.84 221.19 L381.33 225.64 L379.60 230.10 Z" fill="#2b3f49"/><circle cx="458.6" cy="310.8" r="4.8" fill="#2b3f49"/><path d="M463.02 312.72 Q459.56 318.48 457.16 319.44 L456.92 315.12 L458.60 310.80 Z" fill="#2b3f49"/><circle cx="470.4" cy="310.8" r="4.8" fill="#2b3f49"/><path d="M474.82 312.72 Q471.36 318.48 468.96 319.44 L468.72 315.12 L470.40 310.80 Z" fill="#2b3f49"/><path d="M634.5 209.5 L582 209.5 Q552 209.5 552 239.5 L552 297.5" fill="none" stroke="#e51b4f" stroke-width="4.6"/><path d="M672.3 240 L672.3 300 Q672.3 330 642.3 330 L591 330" fill="none" stroke="#e51b4f" stroke-width="4.4"/><polygon points="640.3,206.7 655.0,206.7 655.0,221.5 648.0,234.7 642.3,234.7 645.3,221.3 640.3,221.3" fill="#e51b4f"/><polygon points="659.8,206.7 674.5,206.7 674.5,221.5 667.5,234.7 661.8,234.7 664.8,221.3 659.8,221.3" fill="#e51b4f"/><polygon points="557.3,304.3 562.7,304.3 559.5,317.7 565,317.7 565,331.7 551,331.7 551,317.7" fill="#e51b4f"/><polygon points="576.5,304.3 581.9000000000001,304.3 578.7,317.7 584.2,317.7 584.2,331.7 570.2,331.7 570.2,317.7" fill="#e51b4f"/><ellipse cx="419.5" cy="405" rx="61.5" ry="60.2" fill="#1a1415"/><ellipse cx="419" cy="405.5" rx="62.3" ry="59.5" fill="none" stroke="#1a1415" stroke-width="1" transform="rotate(-8 419 405)"/><ellipse cx="420" cy="404.5" rx="60.5" ry="61" fill="none" stroke="#1a1415" stroke-width="1" transform="rotate(12 420 404)"/><path d="M367.5 392 C369 372 382 358 400 354.2 C408 352.6 415 352 423 351.8 C415 354.2 408 355.8 401 358.4 C385 364.5 374 375 370.8 392 Z" fill="#fff"/><path d="M472.5 420 C469 435 457 446 441 450 C433 452 425 452.8 417 452.3 C425 450.5 433 449 440 446.2 C454.5 441.5 465.5 433 469.3 420.5 Z" fill="#fff"/><path d="M438 449.5 Q452 446 462 437" fill="none" stroke="#1a1415" stroke-width="0.7"/><g fill="none" stroke="#fff" stroke-width="0.5" opacity="0.55"><path d="M361 398 Q360 412 364 424"/><path d="M395 351 Q405 347 418 347"/><path d="M476 395 Q478 405 476 414"/><path d="M400 462 Q412 465 425 464"/><path d="M372 440 Q378 449 386 454"/></g><path d="M470 428 L471 431" stroke="#fff" stroke-width="0.8"/><circle cx="441.7" cy="368.7" r="5.3" fill="#fff"/><path d="M446.58 370.82 Q442.76 377.18 436.93 380.89 L439.84 373.47 L441.70 368.70 Z" fill="#fff"/><circle cx="455.6" cy="368.7" r="5.3" fill="#fff"/><path d="M460.48 370.82 Q456.66 377.18 450.83 380.89 L453.75 373.47 L455.60 368.70 Z" fill="#fff"/><circle cx="385.2" cy="442.6" r="5.4" fill="#fff"/><path d="M380.23 440.44 Q384.12 433.96 390.06 430.45 L387.09 437.74 L385.20 442.60 Z" fill="#fff"/><circle cx="398.2" cy="442.6" r="5.4" fill="#fff"/><path d="M393.23 440.44 Q397.12 433.96 403.06 430.45 L400.09 437.74 L398.20 442.60 Z" fill="#fff"/><rect x="516" y="337" width="211" height="177" fill="#fdfdfd"/><path d="M561 368 L684.5 368 L684.5 446" fill="none" stroke="#414242" stroke-width="4"/><path d="M542.5 386.8 L542.5 484 L555 467 L665 467" fill="none" stroke="#414242" stroke-width="4" stroke-linejoin="miter"/><polygon points="540.5,482 542.5,487.5 547,481" fill="#414242"/><circle cx="535.9" cy="372" r="5.1" fill="#414242"/><path d="M531.21 369.96 Q534.88 363.84 540.59 359.76 L537.68 367.41 L535.90 372.00 Z" fill="#414242"/><circle cx="547.7" cy="372" r="5.1" fill="#414242"/><path d="M543.01 369.96 Q546.68 363.84 552.39 359.76 L549.49 367.41 L547.70 372.00 Z" fill="#414242"/><circle cx="678" cy="461.2" r="5.1" fill="#414242"/><path d="M682.69 463.24 Q679.02 469.36 673.31 473.44 L676.22 465.79 L678.00 461.20 Z" fill="#414242"/><circle cx="690" cy="461.2" r="5.1" fill="#414242"/><path d="M694.69 463.24 Q691.02 469.36 685.31 473.44 L688.22 465.79 L690.00 461.20 Z" fill="#414242"/><rect x="363" y="508.3" width="103.6" height="100.2" rx="6" fill="#f2f2f2"/><defs><linearGradient id="bg1" x1="0" y1="0" x2="1" y2="0"><stop offset="0" stop-color="#2a87c6"/><stop offset="0.7" stop-color="#3298d4"/><stop offset="1" stop-color="#3aa2de"/></linearGradient><linearGradient id="bg2" x1="0" y1="0" x2="0" y2="1"><stop offset="0" stop-color="#2f90cf"/><stop offset="1" stop-color="#2a84c4"/></linearGradient></defs><rect x="457" y="513" width="5" height="16" fill="#000" opacity="0.12"/><path d="M420 502.3 L462 502.3 Q472 502.3 472 512.3 L472 555.4 A5 5 0 0 1 462 555.4 L462 528.7 L459 528.7 L459 514.7 L420 514.7 A6.2 6.2 0 0 1 420 502.3 Z" fill="url(#bg1)"/><path d="M462 504.5 Q469.5 504.5 469.5 512 L469.5 530" fill="none" stroke="#7cc6ef" stroke-width="0.8" opacity="0.6"/><path d="M359.3 587 L359.3 608.7 Q359.3 614.7 365.3 614.7 L387.8 614.7 A2.85 2.85 0 0 0 387.8 609 L384 609 L384 607.7 L366.3 607.7 L366.3 587 A3.5 3.5 0 0 0 359.3 587 Z" fill="url(#bg2)"/><rect x="553.3" y="498.3" width="116.7" height="122.7" fill="#22dde9"/><path d="M592.7 517 L563.6 517 L563.6 603.5 L592.7 603.5 M630 517 L660 517 L660 603.5 L630 603.5" fill="none" stroke="#fff" stroke-width="2"/><polygon points="602,504.5 604.5,504.5 602.5,510.5 610,510.5 610,521.5 598,521.5 598,510.5" fill="#2b3f49"/><polygon points="617.5,504.5 620.0,504.5 618.0,510.5 625.5,510.5 625.5,521.5 613.5,521.5 613.5,510.5" fill="#2b3f49"/><polygon points="598,597.8 610,597.8 610,608.8 606,615.3 603.5,615.3 605.5,608.8 598,608.8" fill="#2b3f49"/><polygon points="613.5,597.8 625.5,597.8 625.5,608.8 621.5,615.3 619.0,615.3 621.0,608.8 613.5,608.8" fill="#2b3f49"/></svg>
<svg class="a" style="left:0px;top:0px;" width="1200" height="675" viewBox="0 0 1200 675"><g transform="translate(31 191) scale(0.17182 0.17143) translate(-293 -185)"><defs><filter id="sh2" x="-30%" y="-30%" width="160%" height="160%"><feGaussianBlur stdDeviation="1.2"/></filter></defs><rect x="346" y="225" width="146" height="91" rx="8" fill="#22dde9"/><rect x="351" y="230" width="136" height="81" rx="5" fill="#2b3f49"/><circle cx="374.5" cy="229" r="14.4" fill="#111" opacity="0.5" filter="url(#sh2)"/><circle cx="463.5" cy="311" r="14.4" fill="#111" opacity="0.5" filter="url(#sh2)"/><circle cx="373.7" cy="227.5" r="14.4" fill="#22dde9"/><circle cx="464.5" cy="312.7" r="14.4" fill="#22dde9"/><circle cx="367.8" cy="230.1" r="4.95" fill="#2b3f49"/><path d="M363.25 228.12 Q366.81 222.18 369.04 221.19 L369.53 225.64 L367.80 230.10 Z" fill="#2b3f49"/><circle cx="379.6" cy="230.1" r="4.95" fill="#2b3f49"/><path d="M375.05 228.12 Q378.61 222.18 380.84 221.19 L381.33 225.64 L379.60 230.10 Z" fill="#2b3f49"/><circle cx="458.6" cy="310.8" r="4.8" fill="#2b3f49"/><path d="M463.02 312.72 Q459.56 318.48 457.16 319.44 L456.92 315.12 L458.60 310.80 Z" fill="#2b3f49"/><circle cx="470.4" cy="310.8" r="4.8" fill="#2b3f49"/><path d="M474.82 312.72 Q471.36 318.48 468.96 319.44 L468.72 315.12 L470.40 310.80 Z" fill="#2b3f49"/><path d="M634.5 209.5 L582 209.5 Q552 209.5 552 239.5 L552 297.5" fill="none" stroke="#e51b4f" stroke-width="4.6"/><path d="M672.3 240 L672.3 300 Q672.3 330 642.3 330 L591 330" fill="none" stroke="#e51b4f" stroke-width="4.4"/><polygon points="640.3,206.7 655.0,206.7 655.0,221.5 648.0,234.7 642.3,234.7 645.3,221.3 640.3,221.3" fill="#e51b4f"/><polygon points="659.8,206.7 674.5,206.7 674.5,221.5 667.5,234.7 661.8,234.7 664.8,221.3 659.8,221.3" fill="#e51b4f"/><polygon points="557.3,304.3 562.7,304.3 559.5,317.7 565,317.7 565,331.7 551,331.7 551,317.7" fill="#e51b4f"/><polygon points="576.5,304.3 581.9000000000001,304.3 578.7,317.7 584.2,317.7 584.2,331.7 570.2,331.7 570.2,317.7" fill="#e51b4f"/><ellipse cx="419.5" cy="405" rx="61.5" ry="60.2" fill="#1a1415"/><ellipse cx="419" cy="405.5" rx="62.3" ry="59.5" fill="none" stroke="#1a1415" stroke-width="1" transform="rotate(-8 419 405)"/><ellipse cx="420" cy="404.5" rx="60.5" ry="61" fill="none" stroke="#1a1415" stroke-width="1" transform="rotate(12 420 404)"/><path d="M367.5 392 C369 372 382 358 400 354.2 C408 352.6 415 352 423 351.8 C415 354.2 408 355.8 401 358.4 C385 364.5 374 375 370.8 392 Z" fill="#fff"/><path d="M472.5 420 C469 435 457 446 441 450 C433 452 425 452.8 417 452.3 C425 450.5 433 449 440 446.2 C454.5 441.5 465.5 433 469.3 420.5 Z" fill="#fff"/><path d="M438 449.5 Q452 446 462 437" fill="none" stroke="#1a1415" stroke-width="0.7"/><g fill="none" stroke="#fff" stroke-width="0.5" opacity="0.55"><path d="M361 398 Q360 412 364 424"/><path d="M395 351 Q405 347 418 347"/><path d="M476 395 Q478 405 476 414"/><path d="M400 462 Q412 465 425 464"/><path d="M372 440 Q378 449 386 454"/></g><path d="M470 428 L471 431" stroke="#fff" stroke-width="0.8"/><circle cx="441.7" cy="368.7" r="5.3" fill="#fff"/><path d="M446.58 370.82 Q442.76 377.18 436.93 380.89 L439.84 373.47 L441.70 368.70 Z" fill="#fff"/><circle cx="455.6" cy="368.7" r="5.3" fill="#fff"/><path d="M460.48 370.82 Q456.66 377.18 450.83 380.89 L453.75 373.47 L455.60 368.70 Z" fill="#fff"/><circle cx="385.2" cy="442.6" r="5.4" fill="#fff"/><path d="M380.23 440.44 Q384.12 433.96 390.06 430.45 L387.09 437.74 L385.20 442.60 Z" fill="#fff"/><circle cx="398.2" cy="442.6" r="5.4" fill="#fff"/><path d="M393.23 440.44 Q397.12 433.96 403.06 430.45 L400.09 437.74 L398.20 442.60 Z" fill="#fff"/><rect x="516" y="337" width="211" height="177" fill="#fdfdfd"/><path d="M561 368 L684.5 368 L684.5 446" fill="none" stroke="#414242" stroke-width="4"/><path d="M542.5 386.8 L542.5 484 L555 467 L665 467" fill="none" stroke="#414242" stroke-width="4" stroke-linejoin="miter"/><polygon points="540.5,482 542.5,487.5 547,481" fill="#414242"/><circle cx="535.9" cy="372" r="5.1" fill="#414242"/><path d="M531.21 369.96 Q534.88 363.84 540.59 359.76 L537.68 367.41 L535.90 372.00 Z" fill="#414242"/><circle cx="547.7" cy="372" r="5.1" fill="#414242"/><path d="M543.01 369.96 Q546.68 363.84 552.39 359.76 L549.49 367.41 L547.70 372.00 Z" fill="#414242"/><circle cx="678" cy="461.2" r="5.1" fill="#414242"/><path d="M682.69 463.24 Q679.02 469.36 673.31 473.44 L676.22 465.79 L678.00 461.20 Z" fill="#414242"/><circle cx="690" cy="461.2" r="5.1" fill="#414242"/><path d="M694.69 463.24 Q691.02 469.36 685.31 473.44 L688.22 465.79 L690.00 461.20 Z" fill="#414242"/><rect x="363" y="508.3" width="103.6" height="100.2" rx="6" fill="#f2f2f2"/><defs><linearGradient id="bg1" x1="0" y1="0" x2="1" y2="0"><stop offset="0" stop-color="#2a87c6"/><stop offset="0.7" stop-color="#3298d4"/><stop offset="1" stop-color="#3aa2de"/></linearGradient><linearGradient id="bg2" x1="0" y1="0" x2="0" y2="1"><stop offset="0" stop-color="#2f90cf"/><stop offset="1" stop-color="#2a84c4"/></linearGradient></defs><rect x="457" y="513" width="5" height="16" fill="#000" opacity="0.12"/><path d="M420 502.3 L462 502.3 Q472 502.3 472 512.3 L472 555.4 A5 5 0 0 1 462 555.4 L462 528.7 L459 528.7 L459 514.7 L420 514.7 A6.2 6.2 0 0 1 420 502.3 Z" fill="url(#bg1)"/><path d="M462 504.5 Q469.5 504.5 469.5 512 L469.5 530" fill="none" stroke="#7cc6ef" stroke-width="0.8" opacity="0.6"/><path d="M359.3 587 L359.3 608.7 Q359.3 614.7 365.3 614.7 L387.8 614.7 A2.85 2.85 0 0 0 387.8 609 L384 609 L384 607.7 L366.3 607.7 L366.3 587 A3.5 3.5 0 0 0 359.3 587 Z" fill="url(#bg2)"/><rect x="553.3" y="498.3" width="116.7" height="122.7" fill="#22dde9"/><path d="M592.7 517 L563.6 517 L563.6 603.5 L592.7 603.5 M630 517 L660 517 L660 603.5 L630 603.5" fill="none" stroke="#fff" stroke-width="2"/><polygon points="602,504.5 604.5,504.5 602.5,510.5 610,510.5 610,521.5 598,521.5 598,510.5" fill="#2b3f49"/><polygon points="617.5,504.5 620.0,504.5 618.0,510.5 625.5,510.5 625.5,521.5 613.5,521.5 613.5,510.5" fill="#2b3f49"/><polygon points="598,597.8 610,597.8 610,608.8 606,615.3 603.5,615.3 605.5,608.8 598,608.8" fill="#2b3f49"/><polygon points="613.5,597.8 625.5,597.8 625.5,608.8 621.5,615.3 619.0,615.3 621.0,608.8 613.5,608.8" fill="#2b3f49"/></g></svg>
<div class="a" style="left:1186px;top:176px;width:13px;height:427px;background:#dcdcdc;"></div>
<div class="a" style="left:1186px;top:176px;width:13px;height:13px;background:#fff;border:1px solid #c8c8c8;"></div>
<svg class="a" style="left:1189px;top:180px;" width="7" height="4" viewBox="0 0 7 4"><path d="M0 4 L7 4 L3.5 0 Z" fill="#606060"/></svg>
<div class="a" style="left:1186px;top:188px;width:13px;height:23px;background:#fff;border:1px solid #c8c8c8;"></div>
<div class="a" style="left:1186px;top:590px;width:13px;height:13px;background:#fff;border:1px solid #c8c8c8;"></div>
<svg class="a" style="left:1189px;top:595px;" width="7" height="4" viewBox="0 0 7 4"><path d="M0 0 L7 0 L3.5 4 Z" fill="#606060"/></svg>
<svg class="a" style="left:1188px;top:606px;" width="9" height="10" viewBox="0 0 9 10"><path d="M0.5 5 L4.5 1 L8.5 5 Z M0.5 9.5 L4.5 5.5 L8.5 9.5 Z" fill="#707070"/></svg>
<svg class="a" style="left:1188px;top:621px;" width="9" height="10" viewBox="0 0 9 10"><path d="M0.5 0.5 L4.5 4.5 L8.5 0.5 Z M0.5 5 L4.5 9 L8.5 5 Z" fill="#707070"/></svg>
<div class="a" style="left:207px;top:652px;width:993px;height:1px;background:#d3d3d3;"></div>
<div class="a" style="left:0px;top:655px;width:1200px;height:1px;background:#cfcfcf;"></div>
<div class="t" style="left:7.50px;top:659.03px;font-size:10px;color:#444;transform:scaleX(0.980);">Slide 1 of 18</div>
<svg class="a" style="left:78px;top:657px;" width="14" height="13" viewBox="0 0 14 13"><path d="M1 1 L6 1 Q7 1 7 2 L7 12 Q7 11 6 11 L1 11 Z" fill="none" stroke="#666" stroke-width="1"/><path d="M7 2 Q7 1 8 1 L10 1 M7 12 Q7 11 8 11 L12 11 L12 8" fill="none" stroke="#666" stroke-width="1"/><path d="M8 8 L9 6 L12.5 2.5 L13.5 3.5 L10 7 Z" fill="none" stroke="#666" stroke-width="0.9"/></svg>
<div class="t" style="left:106.80px;top:659.53px;font-size:10px;color:#444;transform:scaleX(0.942);">French (France)</div>
<svg class="a" style="left:753px;top:657px;" width="11" height="13" viewBox="0 0 11 13"><path d="M5.5 1 L2 4 L9 4 Z" fill="#666"/><rect x="0.5" y="6" width="10" height="1" fill="#666"/><rect x="0.5" y="8.5" width="10" height="1" fill="#666"/><rect x="0.5" y="11" width="10" height="1" fill="#666"/></svg>
<div class="t" style="left:768.00px;top:659.53px;font-size:10px;color:#444;transform:scaleX(0.976);">Notes</div>
<svg class="a" style="left:811px;top:657px;" width="14" height="14" viewBox="0 0 14 14"><path d="M1.5 1 L12.5 1 Q13 1 13 1.5 L13 9 Q13 9.5 12.5 9.5 L6 9.5 L3 12.5 L3 9.5 L1.5 9.5 Q1 9.5 1 9 L1 1.5 Q1 1 1.5 1 Z" fill="#666"/></svg>
<div class="t" style="left:827.00px;top:659.53px;font-size:10px;color:#444;transform:scaleX(0.962);">Comments</div>
<div class="a" style="left:891px;top:655px;width:33px;height:19px;background:#cdcdcd;"></div>
<svg class="a" style="left:901px;top:657px;" width="14" height="13" viewBox="0 0 14 13"><rect x="0.5" y="0.5" width="12" height="11" fill="none" stroke="#666" stroke-width="1"/><path d="M3.5 0.5 L3.5 8.5 L12.5 8.5" fill="none" stroke="#666" stroke-width="1"/><rect x="5.5" y="3" width="5" height="3" fill="none" stroke="#666" stroke-width="0.9"/></svg>
<svg class="a" style="left:934px;top:657px;" width="14" height="14" viewBox="0 0 14 14"><g fill="none" stroke="#666" stroke-width="1"><rect x="0.5" y="0.5" width="5" height="4.5"/><rect x="7.5" y="0.5" width="5" height="4.5"/><rect x="0.5" y="7.5" width="5" height="4.5"/><rect x="7.5" y="7.5" width="5" height="4.5"/></g></svg>
<svg class="a" style="left:967px;top:657px;" width="14" height="14" viewBox="0 0 14 14"><path d="M1 1.5 L6 1.5 L6.5 2 L7 1.5 L12 1.5 L12 11 L7 11 L6.5 12 L6 11 L1 11 Z" fill="none" stroke="#666" stroke-width="1"/><path d="M6.5 2 L6.5 11" stroke="#666" stroke-width="0.9"/><path d="M2.5 4 L5 4 M2.5 6 L5 6 M2.5 8 L5 8 M8 4 L10.5 4 M8 6 L10.5 6 M8 8 L10.5 8" stroke="#888" stroke-width="0.7"/></svg>
<svg class="a" style="left:1000px;top:657px;" width="14" height="14" viewBox="0 0 14 14"><rect x="0.5" y="0.5" width="12" height="1.3" fill="#666"/><rect x="1.5" y="2" width="10" height="5.5" fill="none" stroke="#666" stroke-width="1"/><path d="M3.5 4.5 L9.5 4.5" stroke="#666" stroke-width="0.9"/><path d="M6.5 7.5 L6.5 11 M3.5 12 L9.5 12" stroke="#666" stroke-width="1"/></svg>
<div class="a" style="left:1029px;top:663px;width:5px;height:1.5px;background:#555;"></div>
<div class="a" style="left:1038px;top:664px;width:87px;height:1px;background:#c0c0c0;"></div>
<div class="a" style="left:1081px;top:661px;width:1px;height:6px;background:#aaa;"></div>
<div class="a" style="left:1067px;top:659px;width:4px;height:10px;background:#555;"></div>
<svg class="a" style="left:1128.5px;top:659.5px;" width="9" height="9" viewBox="0 0 9 9"><path d="M4.5 0.5 L4.5 8.5 M0.5 4.5 L8.5 4.5" stroke="#444" stroke-width="1.6"/></svg>
<div class="t" style="left:1149.60px;top:659.03px;font-size:10px;color:#444;transform:scaleX(0.913);">72 %</div>
<svg class="a" style="left:1182px;top:658px;" width="13" height="13" viewBox="0 0 13 13"><rect x="0.5" y="0.5" width="11" height="11" fill="none" stroke="#666" stroke-width="1"/><path d="M3 3 L5 5 M9 3 L7 5 M3 9 L5 7 M9 9 L7 7" stroke="#777" stroke-width="0.9"/><path d="M6 2 L6 3.5 M6 8.5 L6 10 M2 6 L3.5 6 M8.5 6 L10 6" stroke="#777" stroke-width="0.9"/></svg>

</body></html>
